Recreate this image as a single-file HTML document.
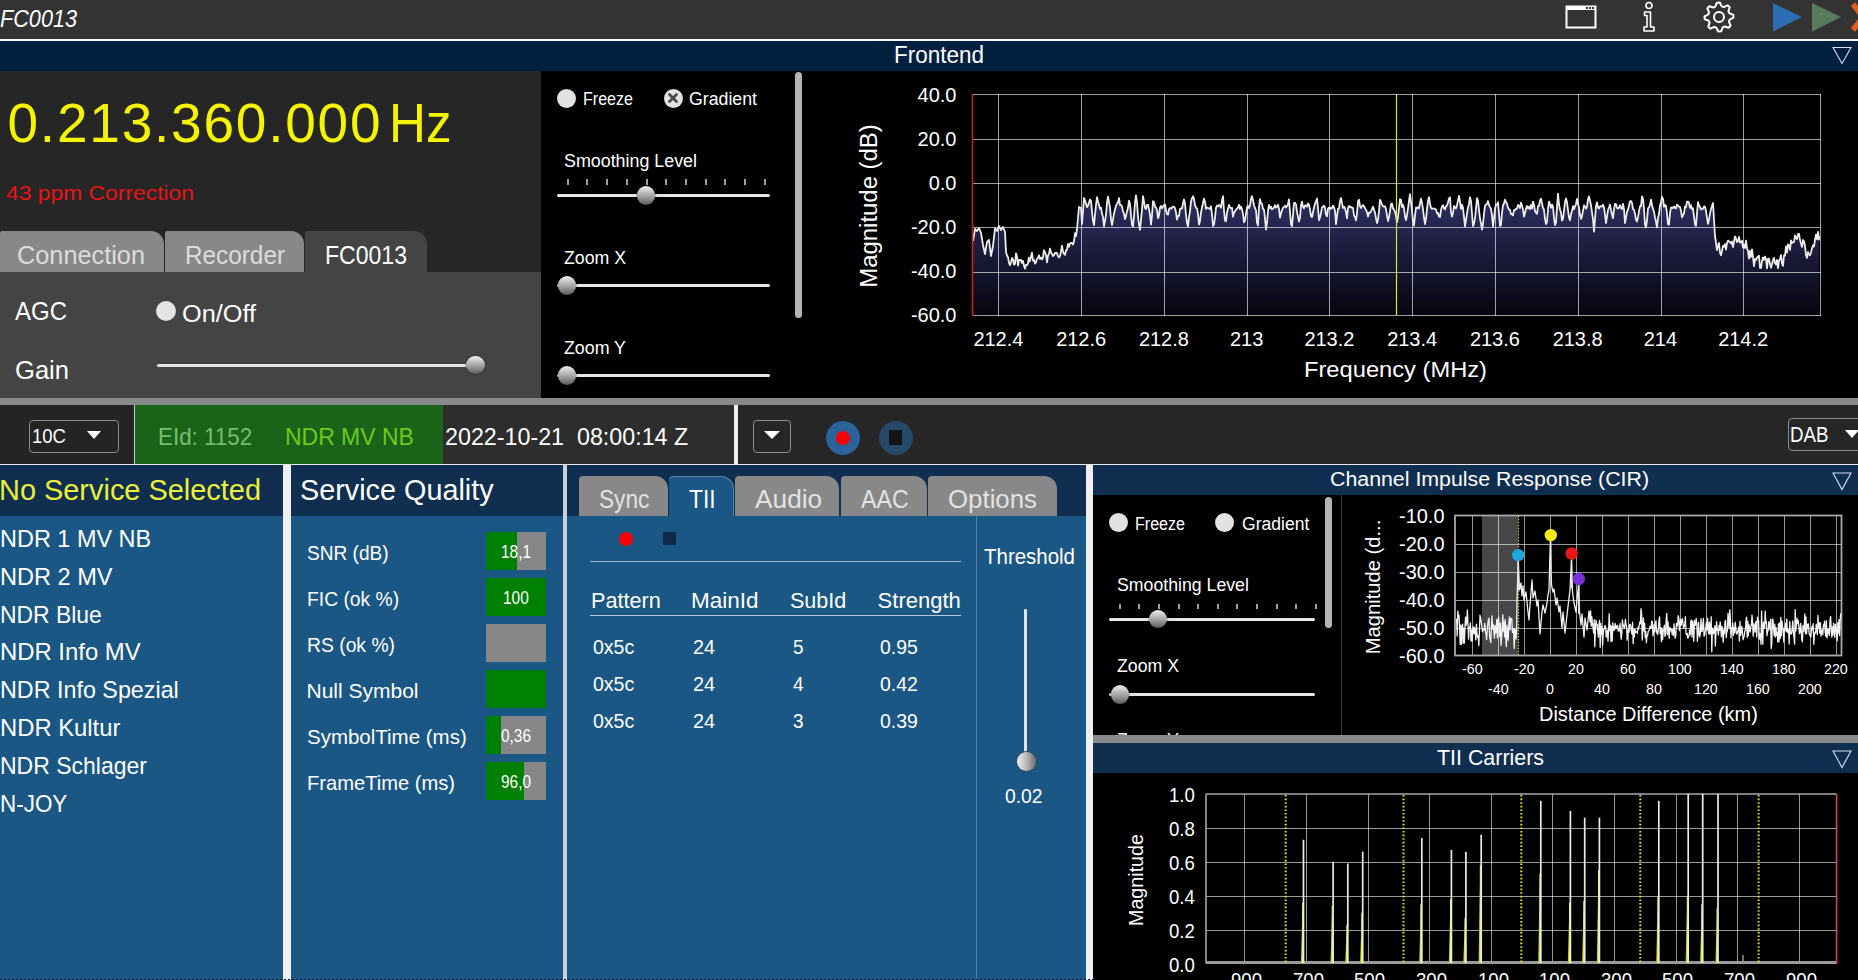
<!DOCTYPE html><html><head><meta charset="utf-8"><style>
html,body{margin:0;padding:0;background:#262626;overflow:hidden;width:1858px;height:980px;}
body>div,.a{position:absolute;}
.t{position:absolute;white-space:pre;font-family:"Liberation Sans",sans-serif;}
svg{position:absolute;}
</style></head><body>
<div style="left:0px;top:0px;width:1858px;height:39px;background:#333333;"></div>
<div style="left:0px;top:39px;width:1858px;height:2px;background:#f4f8fc;"></div>
<div style="left:0px;top:41px;width:1858px;height:30px;background:#01203f;"></div>
<div style="left:0px;top:71px;width:541px;height:327px;background:#262626;"></div>
<div style="left:0px;top:272px;width:541px;height:126px;background:#444444;"></div>
<div style="left:541px;top:71px;width:1317px;height:327px;background:#000000;"></div>
<div style="left:0px;top:398px;width:1858px;height:7px;background:#8a8a8a;"></div>
<div style="left:0px;top:405px;width:1858px;height:59px;background:#262626;"></div>
<div style="left:0px;top:464px;width:1858px;height:1px;background:#e8eef4;"></div>
<div style="left:0px;top:465px;width:283px;height:51px;background:#0f2e50;"></div>
<div style="left:0px;top:516px;width:283px;height:464px;background:#1b5784;"></div>
<div style="left:283px;top:465px;width:8px;height:515px;background:#f0f0f0;"></div>
<div style="left:291px;top:465px;width:272px;height:51px;background:#0f2e50;"></div>
<div style="left:291px;top:516px;width:272px;height:464px;background:#1b5784;"></div>
<div style="left:563px;top:465px;width:4px;height:515px;background:#c8d2de;"></div>
<div style="left:567px;top:465px;width:519px;height:51px;background:#0f2e50;"></div>
<div style="left:567px;top:516px;width:519px;height:464px;background:#1b5784;"></div>
<div style="left:1086px;top:465px;width:7px;height:515px;background:#f0f0f0;"></div>
<div style="left:1093px;top:465px;width:765px;height:30px;background:#0f2e50;"></div>
<div style="left:1093px;top:495px;width:765px;height:240px;background:#000000;"></div>
<div style="left:1093px;top:735px;width:765px;height:8px;background:#8a8a8a;"></div>
<div style="left:1093px;top:743px;width:765px;height:30px;background:#0f2e50;"></div>
<div style="left:1093px;top:773px;width:765px;height:207px;background:#000000;"></div>
<div class="t" style="left:0.00px;top:7.53px;font-size:23px;line-height:23px;color:#ffffff;font-style:italic;transform:scaleX(0.9410);transform-origin:0 0;">FC0013</div>
<svg style="left:1560px;top:0px" width="44" height="36"><rect x="6.5" y="6.5" width="29" height="21" fill="none" stroke="#fff" stroke-width="2"/><rect x="6" y="6" width="30" height="4" fill="#fff"/><rect x="26" y="7" width="2" height="2" fill="#333"/><rect x="29" y="7" width="2" height="2" fill="#333"/><rect x="32" y="7" width="2" height="2" fill="#333"/></svg>
<svg style="left:1636px;top:0px" width="26" height="36"><circle cx="13" cy="5.5" r="3" fill="none" stroke="#fff" stroke-width="1.6"/><path d="M8.5 12 H14.5 V27 H18 V31 H8 V27 H11 V15.5 H8.5 Z" fill="none" stroke="#fff" stroke-width="1.6" stroke-linejoin="round"/></svg>
<svg style="left:1700px;top:0px" width="40" height="36"><polygon points="16.87,2.66 19.71,2.52 21.67,6.33 23.70,7.06 27.64,5.35 29.74,7.26 28.44,11.34 29.36,13.29 33.34,14.87 33.48,17.71 29.67,19.67 28.94,21.70 30.65,25.64 28.74,27.74 24.66,26.44 22.71,27.36 21.13,31.34 18.29,31.48 16.33,27.67 14.30,26.94 10.36,28.65 8.26,26.74 9.56,22.66 8.64,20.71 4.66,19.13 4.52,16.29 8.33,14.33 9.06,12.30 7.35,8.36 9.26,6.26 13.34,7.56 15.29,6.64" fill="none" stroke="#fff" stroke-width="2" stroke-linejoin="round"/><circle cx="19" cy="17" r="5" fill="none" stroke="#fff" stroke-width="2"/></svg>
<svg style="left:1770px;top:0px" width="88" height="36"><polygon points="3,3 32,17 3,31.5" fill="#2b6db2"/><polygon points="42,3 71,17 42,31.5" fill="#587b5e"/><path d="M83 4 L103 30 M103 4 L83 30" stroke="#e0601c" stroke-width="5.5"/></svg>
<div class="t" style="left:893.50px;top:44.13px;font-size:23px;line-height:23px;color:#ffffff;transform:scaleX(0.9777);transform-origin:0 0;">Frontend</div>
<svg style="left:1830px;top:44px" width="24" height="22"><polygon points="3,3.5 21,3.5 12,19.5" fill="none" stroke="#d4e2f0" stroke-width="1.1"/></svg>
<div class="t" style="left:7.50px;top:96.43px;font-size:55px;line-height:55px;color:#f5f500;letter-spacing:1.773px;">0.213.360.000</div>
<div class="t" style="left:389.00px;top:96.43px;font-size:55px;line-height:55px;color:#f5f500;transform:scaleX(0.9298);transform-origin:0 0;">Hz</div>
<div class="t" style="left:5.50px;top:182.22px;font-size:21px;line-height:21px;color:#e81414;transform:scaleX(1.0883);transform-origin:0 0;">43 ppm Correction</div>
<div style="left:0px;top:231px;width:164px;height:41px;background:#888888;border-top-right-radius:13px;border-top-left-radius:2px;"></div>
<div class="t" style="left:17.00px;top:242.83px;font-size:25px;line-height:25px;color:#dcdcdc;transform:scaleX(1.0120);transform-origin:0 0;">Connection</div>
<div style="left:165px;top:231px;width:139px;height:41px;background:#888888;border-top-right-radius:13px;border-top-left-radius:2px;"></div>
<div class="t" style="left:185.00px;top:242.83px;font-size:25px;line-height:25px;color:#dcdcdc;transform:scaleX(0.9726);transform-origin:0 0;">Recorder</div>
<div style="left:305px;top:231px;width:122px;height:41px;background:#444444;border-top-right-radius:13px;border-top-left-radius:2px;"></div>
<div class="t" style="left:325.00px;top:242.83px;font-size:25px;line-height:25px;color:#ffffff;transform:scaleX(0.9220);transform-origin:0 0;">FC0013</div>
<div class="t" style="left:15.00px;top:298.83px;font-size:25px;line-height:25px;color:#ffffff;transform:scaleX(0.9599);transform-origin:0 0;">AGC</div>
<div style="left:156px;top:301px;width:20px;height:20px;border-radius:50%;background:#e4e4e4"></div>
<div class="t" style="left:182.00px;top:302.53px;font-size:23px;line-height:23px;color:#ffffff;transform:scaleX(1.0991);transform-origin:0 0;">On/Off</div>
<div class="t" style="left:15.00px;top:357.83px;font-size:25px;line-height:25px;color:#ffffff;transform:scaleX(1.0226);transform-origin:0 0;">Gain</div>
<div style="left:557.0px;top:88.5px;width:19.0px;height:19.0px;border-radius:50%;background:#e2e2e2"></div>
<div class="t" style="left:583.00px;top:89.76px;font-size:18px;line-height:18px;color:#ffffff;transform:scaleX(0.8925);transform-origin:0 0;">Freeze</div>
<div style="left:663.5px;top:88.5px;width:19.0px;height:19.0px;border-radius:50%;background:#e2e2e2"></div>
<svg style="left:663px;top:88px" width="20" height="20"><path d="M6.5 6.5 L13.5 13.5 M13.5 6.5 L6.5 13.5" stroke="#4a4a4a" stroke-width="2.8" stroke-linecap="round"/></svg>
<div class="t" style="left:689.00px;top:89.76px;font-size:18px;line-height:18px;color:#ffffff;transform:scaleX(0.9850);transform-origin:0 0;">Gradient</div>
<div class="t" style="left:564.00px;top:152.26px;font-size:18px;line-height:18px;color:#ffffff;transform:scaleX(0.9919);transform-origin:0 0;">Smoothing Level</div>
<div style="left:566.5px;top:179px;width:2px;height:5.5px;background:#a0a0a0;"></div>
<div style="left:585.5px;top:179px;width:2px;height:5.5px;background:#a0a0a0;"></div>
<div style="left:605.5px;top:179px;width:2px;height:5.5px;background:#a0a0a0;"></div>
<div style="left:625.5px;top:179px;width:2px;height:5.5px;background:#a0a0a0;"></div>
<div style="left:645.5px;top:179px;width:2px;height:5.5px;background:#a0a0a0;"></div>
<div style="left:664.5px;top:179px;width:2px;height:5.5px;background:#a0a0a0;"></div>
<div style="left:684.5px;top:179px;width:2px;height:5.5px;background:#a0a0a0;"></div>
<div style="left:704.5px;top:179px;width:2px;height:5.5px;background:#a0a0a0;"></div>
<div style="left:723.5px;top:179px;width:2px;height:5.5px;background:#a0a0a0;"></div>
<div style="left:743.5px;top:179px;width:2px;height:5.5px;background:#a0a0a0;"></div>
<div style="left:763.5px;top:179px;width:2px;height:5.5px;background:#a0a0a0;"></div>
<div style="left:557px;top:194.0px;width:213px;height:3px;background:#e6e6e6;border-radius:2px;"></div>
<div style="left:636.8px;top:186.3px;width:18.4px;height:18.4px;border-radius:50%;background:linear-gradient(180deg,#f2f2f2 0%,#c4c4c4 30%,#9a9a9a 60%,#5a5a5a 100%);box-shadow:0 0 1.5px #000"></div>
<div class="t" style="left:564.00px;top:248.76px;font-size:18px;line-height:18px;color:#ffffff;transform:scaleX(0.9838);transform-origin:0 0;">Zoom X</div>
<div style="left:557px;top:284.0px;width:213px;height:3px;background:#e6e6e6;border-radius:2px;"></div>
<div style="left:557.8px;top:276.3px;width:18.4px;height:18.4px;border-radius:50%;background:linear-gradient(180deg,#f2f2f2 0%,#c4c4c4 30%,#9a9a9a 60%,#5a5a5a 100%);box-shadow:0 0 1.5px #000"></div>
<div class="t" style="left:564.00px;top:338.76px;font-size:18px;line-height:18px;color:#ffffff;transform:scaleX(0.9889);transform-origin:0 0;">Zoom Y</div>
<div style="left:557px;top:374.0px;width:213px;height:3px;background:#e6e6e6;border-radius:2px;"></div>
<div style="left:557.8px;top:366.3px;width:18.4px;height:18.4px;border-radius:50%;background:linear-gradient(180deg,#f2f2f2 0%,#c4c4c4 30%,#9a9a9a 60%,#5a5a5a 100%);box-shadow:0 0 1.5px #000"></div>
<div style="left:795px;top:72px;width:7px;height:246px;background:#b4b4b4;border-radius:4px;"></div>
<div style="left:157px;top:363.5px;width:310px;height:3px;background:#e6e6e6;border-radius:2px;"></div>
<div style="left:466.4px;top:355.8px;width:18.4px;height:18.4px;border-radius:50%;background:linear-gradient(180deg,#f2f2f2 0%,#c4c4c4 30%,#9a9a9a 60%,#5a5a5a 100%);box-shadow:0 0 1.5px #000"></div>
<svg style="left:807px;top:71px" width="1051" height="327" viewBox="807 71 1051 327"><defs><linearGradient id="sg" x1="0" y1="94" x2="0" y2="315" gradientUnits="userSpaceOnUse"><stop offset="0" stop-color="#5a5aa8"/><stop offset="0.5" stop-color="#2c2c5e"/><stop offset="1" stop-color="#06060f"/></linearGradient></defs><polygon points="973.0,315 973.0,241.0 974.0,235.0 975.0,229.0 976.0,230.0 977.0,231.0 978.0,229.5 979.0,228.0 980.0,230.5 981.0,233.0 982.0,239.0 983.0,245.0 984.0,249.5 985.0,254.0 986.0,248.0 987.0,242.0 988.0,241.0 989.0,240.0 990.0,248.0 991.0,256.0 992.0,251.0 993.0,246.0 994.0,237.0 995.0,228.0 996.0,229.5 997.0,231.0 998.0,228.5 999.0,226.0 1000.0,228.0 1001.0,230.0 1002.0,228.5 1003.0,227.0 1004.0,229.5 1005.0,232.0 1006.0,252.0 1007.0,255.5 1008.0,257.2 1009.0,262.8 1010.0,265.1 1011.0,262.2 1012.0,257.9 1013.0,259.5 1014.0,264.6 1015.0,263.9 1016.0,253.3 1017.0,256.6 1018.0,265.5 1019.0,259.8 1020.0,260.4 1021.0,259.8 1022.0,263.0 1023.0,260.9 1024.0,265.6 1025.0,268.6 1026.0,264.8 1027.0,265.0 1028.0,263.2 1028.8,257.7 1029.6,261.4 1030.4,259.0 1031.2,255.8 1032.0,252.7 1033.0,260.6 1034.0,259.8 1035.0,263.5 1036.0,262.3 1037.0,258.8 1038.0,257.9 1039.0,255.3 1040.0,259.1 1041.0,257.6 1042.0,259.4 1043.0,257.3 1044.0,250.2 1045.0,252.5 1046.0,255.0 1047.0,262.3 1048.0,255.6 1049.0,253.9 1050.0,248.6 1051.0,252.4 1052.0,253.9 1053.0,256.0 1054.0,255.3 1055.0,252.9 1056.0,252.8 1057.0,252.9 1058.0,256.3 1059.0,257.5 1060.0,256.1 1061.0,251.5 1062.0,245.6 1063.0,251.9 1064.0,253.9 1065.0,254.8 1066.0,250.5 1067.0,249.5 1068.0,244.0 1069.0,246.8 1070.0,243.5 1071.0,243.0 1072.0,242.9 1073.0,244.5 1074.0,241.4 1075.0,233.1 1076.0,236.1 1077.0,229.0 1078.0,218.0 1079.0,207.0 1080.0,207.5 1081.0,208.0 1082.0,224.0 1083.0,211.0 1084.0,198.0 1085.0,200.5 1087.0,207.1 1088.0,205.8 1089.0,202.7 1090.0,199.6 1091.0,200.8 1092.0,211.4 1093.0,220.8 1094.0,225.1 1095.0,215.1 1096.0,205.0 1097.0,197.2 1098.0,201.4 1099.0,205.0 1100.0,208.8 1101.0,207.6 1102.0,213.6 1103.0,217.1 1104.0,226.3 1105.0,220.9 1106.0,214.7 1107.0,202.6 1108.0,196.7 1109.0,202.2 1110.0,207.6 1111.0,219.2 1112.0,225.2 1113.0,219.6 1114.0,213.5 1115.0,209.4 1116.0,205.8 1117.0,203.7 1118.0,202.2 1119.0,198.1 1120.0,205.1 1121.0,205.1 1122.0,206.5 1123.0,211.2 1124.0,213.5 1125.0,219.0 1126.0,215.9 1127.0,211.4 1128.0,207.8 1129.0,200.6 1130.0,203.9 1131.0,215.6 1132.0,224.8 1133.0,226.4 1134.0,216.0 1135.0,202.7 1136.0,195.3 1137.0,202.5 1138.0,217.2 1139.0,224.6 1140.0,229.9 1141.0,220.3 1142.0,209.1 1143.0,196.2 1144.0,201.7 1145.0,207.9 1146.0,209.1 1147.0,205.0 1148.0,204.8 1149.0,209.3 1150.0,214.7 1151.0,224.6 1152.0,215.5 1153.0,201.1 1154.0,201.9 1155.0,206.7 1156.0,207.5 1157.0,210.2 1158.0,218.2 1159.0,215.6 1160.0,207.4 1161.0,205.9 1162.0,208.2 1163.0,206.5 1164.0,205.0 1165.0,204.5 1166.0,210.3 1167.0,214.2 1168.0,214.6 1169.0,209.1 1170.0,208.0 1171.0,208.8 1172.0,207.6 1173.0,206.5 1174.0,206.8 1175.0,208.1 1176.0,212.5 1177.0,219.6 1178.0,216.0 1179.0,215.8 1180.0,209.1 1181.0,208.4 1182.0,208.6 1183.0,203.3 1184.0,199.5 1185.0,203.4 1186.0,215.1 1187.0,222.9 1188.0,226.4 1189.0,217.2 1190.0,211.3 1191.0,201.7 1192.0,198.3 1193.0,196.3 1194.0,198.9 1195.0,205.4 1196.0,207.7 1197.0,208.4 1198.0,213.7 1199.0,224.5 1200.0,221.3 1201.0,212.4 1202.0,207.7 1203.0,203.0 1204.0,198.7 1205.0,201.7 1206.0,208.9 1207.0,207.7 1208.0,208.0 1209.0,208.3 1210.0,209.2 1211.0,206.3 1212.0,214.1 1213.0,226.0 1214.0,224.7 1215.0,217.5 1216.0,207.9 1217.0,205.5 1218.0,206.4 1219.0,205.0 1220.0,205.8 1221.0,207.7 1222.0,200.5 1223.0,196.1 1224.0,210.5 1225.0,220.7 1226.0,221.3 1227.0,212.7 1228.0,208.5 1229.0,204.9 1230.0,207.5 1231.0,208.3 1232.0,207.7 1233.0,216.7 1234.0,212.8 1235.0,211.2 1236.0,209.8 1237.0,208.4 1238.0,207.6 1239.0,204.8 1240.0,209.2 1241.0,206.6 1242.0,209.4 1243.0,213.8 1244.0,222.4 1245.0,220.4 1246.0,214.0 1247.0,207.3 1248.0,205.9 1249.0,208.1 1250.0,205.3 1251.0,198.7 1252.0,196.1 1253.0,200.3 1254.0,205.3 1255.0,208.3 1256.0,210.1 1257.0,222.8 1258.0,225.5 1259.0,207.1 1260.0,199.2 1261.0,203.3 1262.0,203.8 1263.0,209.0 1264.0,209.7 1265.0,218.6 1266.0,229.7 1267.0,222.5 1268.0,211.0 1269.0,204.9 1270.0,208.1 1271.0,206.8 1272.0,209.4 1273.0,208.6 1274.0,207.5 1275.0,205.1 1276.0,207.6 1277.0,206.8 1278.0,204.8 1279.0,208.9 1280.0,217.7 1281.0,213.6 1282.0,210.1 1283.0,207.8 1284.0,206.8 1285.0,205.8 1286.0,207.4 1287.0,206.0 1288.0,204.2 1289.0,199.4 1290.0,212.2 1291.0,224.3 1292.0,226.1 1293.0,214.9 1294.0,203.0 1295.0,202.9 1296.0,204.2 1297.0,212.1 1298.0,216.7 1299.0,221.5 1300.0,218.0 1301.0,205.3 1302.0,201.7 1303.0,206.8 1304.0,208.3 1305.0,205.4 1306.0,205.7 1307.0,206.7 1308.0,203.4 1309.0,204.8 1310.0,209.2 1311.0,216.2 1312.0,217.2 1313.0,212.1 1314.0,207.6 1315.0,203.8 1316.0,201.2 1317.0,198.5 1318.0,207.9 1319.0,220.3 1320.0,217.3 1321.0,213.1 1322.0,207.3 1323.0,206.9 1324.0,205.6 1325.0,207.7 1326.0,214.4 1327.0,216.3 1328.0,208.7 1329.0,207.5 1330.0,209.2 1331.0,207.6 1332.0,208.3 1333.0,205.6 1334.0,207.5 1335.0,210.7 1336.0,224.1 1337.0,216.4 1338.0,208.8 1339.0,208.6 1340.0,201.1 1341.0,198.0 1342.0,203.1 1343.0,208.1 1344.0,206.6 1345.0,208.2 1346.0,212.2 1347.0,218.4 1348.0,207.8 1349.0,205.9 1350.0,207.3 1351.0,206.9 1352.0,207.9 1353.0,208.0 1354.0,215.4 1355.0,216.9 1356.0,220.4 1357.0,213.8 1358.0,201.3 1359.0,199.7 1360.0,206.3 1361.0,208.0 1362.0,205.9 1363.0,205.2 1364.0,206.3 1365.0,208.1 1366.0,209.9 1367.0,212.2 1368.0,216.6 1369.0,212.5 1370.0,212.8 1371.0,211.4 1372.0,209.1 1373.0,206.7 1374.0,209.5 1375.0,212.7 1376.0,218.4 1377.0,223.1 1378.0,219.6 1379.0,211.1 1380.0,199.8 1381.0,201.7 1382.0,204.5 1383.0,206.3 1384.0,206.5 1385.0,206.4 1386.0,209.1 1387.0,215.4 1388.0,221.0 1389.0,217.2 1390.0,210.7 1391.0,204.3 1392.0,203.5 1393.0,208.3 1394.0,209.5 1395.0,211.8 1396.0,215.9 1397.0,222.2 1398.0,217.0 1399.0,208.2 1400.0,199.2 1401.0,199.7 1402.0,207.1 1403.0,204.8 1404.0,208.0 1405.0,216.4 1406.0,220.0 1407.0,215.2 1408.0,208.4 1409.0,200.8 1410.0,194.1 1411.0,202.1 1412.0,210.1 1413.0,221.3 1414.0,225.5 1415.0,215.6 1416.0,207.5 1417.0,208.3 1418.0,207.1 1419.0,208.3 1420.0,203.3 1421.0,198.7 1422.0,202.6 1423.0,209.6 1424.0,217.6 1425.0,224.2 1426.0,218.8 1427.0,209.1 1428.0,201.1 1429.0,197.2 1430.0,204.0 1431.0,207.8 1432.0,208.8 1433.0,208.5 1434.0,208.7 1435.0,208.9 1436.0,209.7 1437.0,213.3 1438.0,212.9 1439.0,216.7 1440.0,217.0 1441.0,209.9 1442.0,206.6 1443.0,205.2 1444.0,208.2 1445.0,209.5 1446.0,206.4 1447.0,205.3 1448.0,202.5 1449.0,198.4 1450.0,197.3 1451.0,212.2 1452.0,216.5 1453.0,213.3 1454.0,206.0 1455.0,207.7 1456.0,208.4 1457.0,205.4 1458.0,200.4 1459.0,196.0 1460.0,201.5 1461.0,209.0 1462.0,204.7 1463.0,207.8 1464.0,217.1 1465.0,226.3 1466.0,220.0 1467.0,213.4 1468.0,207.5 1469.0,203.9 1470.0,197.2 1471.0,201.1 1472.0,213.8 1473.0,226.2 1474.0,223.6 1475.0,218.1 1476.0,208.4 1477.0,198.1 1478.0,200.8 1479.0,210.2 1480.0,218.5 1481.0,223.2 1482.0,229.5 1483.0,224.0 1484.0,214.0 1485.0,205.6 1486.0,204.7 1487.0,204.0 1488.0,201.0 1489.0,205.1 1490.0,207.1 1491.0,208.8 1492.0,215.3 1493.0,226.5 1494.0,218.3 1495.0,208.6 1496.0,204.6 1497.0,204.7 1498.0,202.3 1499.0,213.9 1500.0,226.0 1501.0,224.8 1502.0,212.9 1503.0,205.3 1504.0,203.5 1505.0,199.6 1506.0,202.0 1507.0,203.9 1508.0,207.7 1509.0,209.5 1510.0,209.7 1511.0,214.2 1512.0,214.1 1513.0,215.4 1514.0,209.8 1515.0,210.2 1516.0,208.7 1517.0,208.6 1518.0,204.9 1519.0,205.8 1520.0,208.1 1521.0,202.7 1522.0,205.5 1523.0,209.4 1524.0,216.6 1525.0,213.1 1526.0,208.8 1527.0,206.0 1528.0,208.4 1529.0,206.6 1530.0,209.1 1531.0,205.0 1532.0,208.6 1533.0,201.6 1534.0,204.7 1535.0,210.8 1536.0,212.8 1537.0,213.9 1538.0,206.1 1539.0,205.8 1540.0,200.9 1541.0,198.7 1542.0,203.2 1543.0,208.1 1544.0,209.5 1545.0,219.1 1546.0,224.1 1547.0,221.8 1548.0,209.0 1549.0,201.6 1550.0,204.3 1551.0,207.8 1552.0,204.6 1553.0,206.7 1554.0,218.0 1555.0,225.2 1556.0,223.0 1557.0,207.1 1558.0,193.6 1559.0,204.3 1560.0,209.5 1561.0,212.5 1562.0,220.6 1563.0,218.8 1564.0,210.8 1565.0,201.9 1566.0,198.4 1567.0,202.3 1568.0,210.1 1569.0,217.5 1570.0,220.2 1571.0,214.1 1572.0,210.9 1573.0,206.1 1574.0,209.2 1575.0,206.5 1576.0,204.2 1577.0,199.0 1578.0,204.0 1579.0,207.2 1580.0,214.5 1581.0,218.9 1582.0,216.2 1583.0,210.7 1584.0,205.4 1585.0,206.5 1586.0,208.7 1587.0,206.7 1588.0,199.5 1589.0,196.4 1590.0,200.7 1591.0,205.1 1592.0,212.4 1593.0,219.1 1594.0,231.6 1595.0,219.1 1596.0,206.3 1597.0,202.4 1598.0,207.7 1599.0,208.6 1600.0,206.4 1601.0,206.2 1602.0,206.6 1603.0,204.6 1604.0,207.6 1605.0,214.9 1606.0,223.2 1607.0,216.4 1608.0,210.0 1609.0,207.5 1610.0,204.6 1611.0,209.9 1612.0,214.2 1613.0,218.2 1614.0,209.4 1615.0,203.9 1616.0,204.1 1617.0,207.9 1618.0,208.6 1619.0,207.6 1620.0,205.3 1621.0,208.3 1622.0,209.0 1623.0,203.9 1624.0,209.2 1625.0,223.0 1626.0,217.9 1627.0,211.9 1628.0,209.4 1629.0,205.6 1630.0,201.5 1631.0,200.9 1632.0,202.8 1633.0,209.2 1634.0,209.7 1635.0,213.8 1636.0,219.5 1637.0,221.5 1638.0,216.9 1639.0,211.3 1640.0,206.1 1641.0,206.3 1642.0,196.4 1643.0,198.9 1644.0,208.9 1645.0,224.6 1646.0,227.4 1647.0,220.7 1648.0,208.3 1649.0,207.3 1650.0,204.7 1651.0,199.6 1652.0,205.0 1653.0,209.0 1654.0,211.6 1655.0,217.4 1656.0,221.8 1657.0,227.4 1658.0,217.9 1659.0,214.1 1660.0,205.7 1661.0,201.9 1662.0,196.9 1663.0,198.8 1664.0,206.8 1665.0,204.9 1666.0,205.9 1667.0,213.6 1668.0,224.1 1669.0,224.7 1670.0,213.0 1671.0,207.7 1672.0,207.5 1673.0,208.2 1674.0,206.4 1675.0,207.5 1676.0,208.5 1677.0,204.6 1678.0,205.5 1679.0,206.8 1680.0,206.9 1681.0,210.9 1682.0,217.4 1683.0,215.1 1684.0,213.5 1685.0,206.4 1686.0,207.2 1687.0,201.7 1688.0,201.7 1689.0,202.9 1690.0,207.9 1691.0,205.2 1692.0,209.3 1693.0,208.3 1694.0,216.3 1695.0,224.6 1696.0,225.9 1697.0,213.1 1698.0,202.1 1699.0,205.3 1700.0,206.9 1701.0,209.5 1702.0,208.7 1703.0,208.8 1704.0,206.5 1705.0,206.7 1706.0,211.0 1707.0,217.8 1708.0,223.9 1709.0,219.7 1710.0,213.4 1711.0,209.0 1712.0,206.1 1713.0,203.0 1715.0,236.0 1717.0,250.0 1719.0,242.8 1720.0,252.9 1721.0,255.2 1722.0,250.6 1723.0,245.8 1724.0,246.8 1725.0,244.1 1726.0,249.6 1727.0,243.2 1728.0,240.6 1729.0,241.3 1730.0,242.2 1731.0,243.6 1732.0,241.5 1733.0,247.1 1734.0,241.7 1735.0,236.4 1736.0,238.4 1737.0,242.1 1738.0,241.2 1739.0,236.9 1740.0,242.7 1741.0,242.2 1742.0,240.8 1743.0,247.6 1744.0,244.7 1745.0,248.0 1746.0,240.6 1747.0,248.2 1748.0,250.8 1749.0,258.6 1750.0,250.8 1751.0,257.0 1752.0,249.3 1753.0,256.7 1754.0,266.1 1755.0,259.0 1756.0,260.1 1757.0,257.5 1758.0,256.6 1759.0,255.7 1760.0,268.0 1761.0,267.8 1762.0,260.9 1763.0,257.5 1764.0,259.8 1765.0,256.5 1766.0,259.0 1767.0,268.3 1768.0,258.9 1769.0,258.6 1770.0,264.1 1771.0,267.7 1772.0,264.2 1773.0,260.0 1774.0,257.9 1775.0,263.1 1776.0,264.5 1777.0,259.9 1778.0,268.2 1779.0,260.8 1780.0,259.1 1781.0,255.0 1782.0,263.4 1783.0,265.8 1784.0,255.5 1785.0,255.7 1786.0,246.4 1787.0,252.5 1788.0,244.4 1789.0,245.6 1790.0,249.9 1791.0,240.5 1792.0,243.1 1793.0,242.2 1794.0,241.8 1795.0,235.3 1796.0,238.0 1797.0,239.1 1798.0,234.2 1799.0,233.8 1800.0,240.1 1801.0,243.3 1802.0,246.9 1803.0,240.0 1804.0,241.3 1805.0,246.2 1806.0,255.2 1807.0,257.9 1808.0,252.0 1809.0,254.4 1810.0,255.2 1811.0,252.6 1812.0,248.2 1813.0,245.3 1814.0,246.6 1815.0,239.7 1816.0,234.6 1817.0,239.3 1818.0,231.9 1819.0,239.7 1819.0,236.0 1819,315" fill="url(#sg)"/><line x1="972" y1="94.5" x2="1821" y2="94.5" stroke="rgba(255,255,255,0.62)" stroke-width="1"/><line x1="972" y1="139.5" x2="1821" y2="139.5" stroke="rgba(255,255,255,0.62)" stroke-width="1"/><line x1="972" y1="183.5" x2="1821" y2="183.5" stroke="rgba(255,255,255,0.62)" stroke-width="1"/><line x1="972" y1="227.5" x2="1821" y2="227.5" stroke="rgba(255,255,255,0.62)" stroke-width="1"/><line x1="972" y1="272.5" x2="1821" y2="272.5" stroke="rgba(255,255,255,0.62)" stroke-width="1"/><line x1="972" y1="315.5" x2="1821" y2="315.5" stroke="rgba(255,255,255,0.62)" stroke-width="1"/><line x1="998.5" y1="94" x2="998.5" y2="316" stroke="rgba(255,255,255,0.62)" stroke-width="1"/><line x1="1081.5" y1="94" x2="1081.5" y2="316" stroke="rgba(255,255,255,0.62)" stroke-width="1"/><line x1="1164.5" y1="94" x2="1164.5" y2="316" stroke="rgba(255,255,255,0.62)" stroke-width="1"/><line x1="1247.5" y1="94" x2="1247.5" y2="316" stroke="rgba(255,255,255,0.62)" stroke-width="1"/><line x1="1329.5" y1="94" x2="1329.5" y2="316" stroke="rgba(255,255,255,0.62)" stroke-width="1"/><line x1="1412.5" y1="94" x2="1412.5" y2="316" stroke="rgba(255,255,255,0.62)" stroke-width="1"/><line x1="1495.5" y1="94" x2="1495.5" y2="316" stroke="rgba(255,255,255,0.62)" stroke-width="1"/><line x1="1578.5" y1="94" x2="1578.5" y2="316" stroke="rgba(255,255,255,0.62)" stroke-width="1"/><line x1="1661.5" y1="94" x2="1661.5" y2="316" stroke="rgba(255,255,255,0.62)" stroke-width="1"/><line x1="1743.5" y1="94" x2="1743.5" y2="316" stroke="rgba(255,255,255,0.62)" stroke-width="1"/><line x1="1820.5" y1="94" x2="1820.5" y2="316" stroke="rgba(255,255,255,0.62)" stroke-width="1"/><polyline points="973.0,241.0 974.0,235.0 975.0,229.0 976.0,230.0 977.0,231.0 978.0,229.5 979.0,228.0 980.0,230.5 981.0,233.0 982.0,239.0 983.0,245.0 984.0,249.5 985.0,254.0 986.0,248.0 987.0,242.0 988.0,241.0 989.0,240.0 990.0,248.0 991.0,256.0 992.0,251.0 993.0,246.0 994.0,237.0 995.0,228.0 996.0,229.5 997.0,231.0 998.0,228.5 999.0,226.0 1000.0,228.0 1001.0,230.0 1002.0,228.5 1003.0,227.0 1004.0,229.5 1005.0,232.0 1006.0,252.0 1007.0,255.5 1008.0,257.2 1009.0,262.8 1010.0,265.1 1011.0,262.2 1012.0,257.9 1013.0,259.5 1014.0,264.6 1015.0,263.9 1016.0,253.3 1017.0,256.6 1018.0,265.5 1019.0,259.8 1020.0,260.4 1021.0,259.8 1022.0,263.0 1023.0,260.9 1024.0,265.6 1025.0,268.6 1026.0,264.8 1027.0,265.0 1028.0,263.2 1028.8,257.7 1029.6,261.4 1030.4,259.0 1031.2,255.8 1032.0,252.7 1033.0,260.6 1034.0,259.8 1035.0,263.5 1036.0,262.3 1037.0,258.8 1038.0,257.9 1039.0,255.3 1040.0,259.1 1041.0,257.6 1042.0,259.4 1043.0,257.3 1044.0,250.2 1045.0,252.5 1046.0,255.0 1047.0,262.3 1048.0,255.6 1049.0,253.9 1050.0,248.6 1051.0,252.4 1052.0,253.9 1053.0,256.0 1054.0,255.3 1055.0,252.9 1056.0,252.8 1057.0,252.9 1058.0,256.3 1059.0,257.5 1060.0,256.1 1061.0,251.5 1062.0,245.6 1063.0,251.9 1064.0,253.9 1065.0,254.8 1066.0,250.5 1067.0,249.5 1068.0,244.0 1069.0,246.8 1070.0,243.5 1071.0,243.0 1072.0,242.9 1073.0,244.5 1074.0,241.4 1075.0,233.1 1076.0,236.1 1077.0,229.0 1078.0,218.0 1079.0,207.0 1080.0,207.5 1081.0,208.0 1082.0,224.0 1083.0,211.0 1084.0,198.0 1085.0,200.5 1087.0,207.1 1088.0,205.8 1089.0,202.7 1090.0,199.6 1091.0,200.8 1092.0,211.4 1093.0,220.8 1094.0,225.1 1095.0,215.1 1096.0,205.0 1097.0,197.2 1098.0,201.4 1099.0,205.0 1100.0,208.8 1101.0,207.6 1102.0,213.6 1103.0,217.1 1104.0,226.3 1105.0,220.9 1106.0,214.7 1107.0,202.6 1108.0,196.7 1109.0,202.2 1110.0,207.6 1111.0,219.2 1112.0,225.2 1113.0,219.6 1114.0,213.5 1115.0,209.4 1116.0,205.8 1117.0,203.7 1118.0,202.2 1119.0,198.1 1120.0,205.1 1121.0,205.1 1122.0,206.5 1123.0,211.2 1124.0,213.5 1125.0,219.0 1126.0,215.9 1127.0,211.4 1128.0,207.8 1129.0,200.6 1130.0,203.9 1131.0,215.6 1132.0,224.8 1133.0,226.4 1134.0,216.0 1135.0,202.7 1136.0,195.3 1137.0,202.5 1138.0,217.2 1139.0,224.6 1140.0,229.9 1141.0,220.3 1142.0,209.1 1143.0,196.2 1144.0,201.7 1145.0,207.9 1146.0,209.1 1147.0,205.0 1148.0,204.8 1149.0,209.3 1150.0,214.7 1151.0,224.6 1152.0,215.5 1153.0,201.1 1154.0,201.9 1155.0,206.7 1156.0,207.5 1157.0,210.2 1158.0,218.2 1159.0,215.6 1160.0,207.4 1161.0,205.9 1162.0,208.2 1163.0,206.5 1164.0,205.0 1165.0,204.5 1166.0,210.3 1167.0,214.2 1168.0,214.6 1169.0,209.1 1170.0,208.0 1171.0,208.8 1172.0,207.6 1173.0,206.5 1174.0,206.8 1175.0,208.1 1176.0,212.5 1177.0,219.6 1178.0,216.0 1179.0,215.8 1180.0,209.1 1181.0,208.4 1182.0,208.6 1183.0,203.3 1184.0,199.5 1185.0,203.4 1186.0,215.1 1187.0,222.9 1188.0,226.4 1189.0,217.2 1190.0,211.3 1191.0,201.7 1192.0,198.3 1193.0,196.3 1194.0,198.9 1195.0,205.4 1196.0,207.7 1197.0,208.4 1198.0,213.7 1199.0,224.5 1200.0,221.3 1201.0,212.4 1202.0,207.7 1203.0,203.0 1204.0,198.7 1205.0,201.7 1206.0,208.9 1207.0,207.7 1208.0,208.0 1209.0,208.3 1210.0,209.2 1211.0,206.3 1212.0,214.1 1213.0,226.0 1214.0,224.7 1215.0,217.5 1216.0,207.9 1217.0,205.5 1218.0,206.4 1219.0,205.0 1220.0,205.8 1221.0,207.7 1222.0,200.5 1223.0,196.1 1224.0,210.5 1225.0,220.7 1226.0,221.3 1227.0,212.7 1228.0,208.5 1229.0,204.9 1230.0,207.5 1231.0,208.3 1232.0,207.7 1233.0,216.7 1234.0,212.8 1235.0,211.2 1236.0,209.8 1237.0,208.4 1238.0,207.6 1239.0,204.8 1240.0,209.2 1241.0,206.6 1242.0,209.4 1243.0,213.8 1244.0,222.4 1245.0,220.4 1246.0,214.0 1247.0,207.3 1248.0,205.9 1249.0,208.1 1250.0,205.3 1251.0,198.7 1252.0,196.1 1253.0,200.3 1254.0,205.3 1255.0,208.3 1256.0,210.1 1257.0,222.8 1258.0,225.5 1259.0,207.1 1260.0,199.2 1261.0,203.3 1262.0,203.8 1263.0,209.0 1264.0,209.7 1265.0,218.6 1266.0,229.7 1267.0,222.5 1268.0,211.0 1269.0,204.9 1270.0,208.1 1271.0,206.8 1272.0,209.4 1273.0,208.6 1274.0,207.5 1275.0,205.1 1276.0,207.6 1277.0,206.8 1278.0,204.8 1279.0,208.9 1280.0,217.7 1281.0,213.6 1282.0,210.1 1283.0,207.8 1284.0,206.8 1285.0,205.8 1286.0,207.4 1287.0,206.0 1288.0,204.2 1289.0,199.4 1290.0,212.2 1291.0,224.3 1292.0,226.1 1293.0,214.9 1294.0,203.0 1295.0,202.9 1296.0,204.2 1297.0,212.1 1298.0,216.7 1299.0,221.5 1300.0,218.0 1301.0,205.3 1302.0,201.7 1303.0,206.8 1304.0,208.3 1305.0,205.4 1306.0,205.7 1307.0,206.7 1308.0,203.4 1309.0,204.8 1310.0,209.2 1311.0,216.2 1312.0,217.2 1313.0,212.1 1314.0,207.6 1315.0,203.8 1316.0,201.2 1317.0,198.5 1318.0,207.9 1319.0,220.3 1320.0,217.3 1321.0,213.1 1322.0,207.3 1323.0,206.9 1324.0,205.6 1325.0,207.7 1326.0,214.4 1327.0,216.3 1328.0,208.7 1329.0,207.5 1330.0,209.2 1331.0,207.6 1332.0,208.3 1333.0,205.6 1334.0,207.5 1335.0,210.7 1336.0,224.1 1337.0,216.4 1338.0,208.8 1339.0,208.6 1340.0,201.1 1341.0,198.0 1342.0,203.1 1343.0,208.1 1344.0,206.6 1345.0,208.2 1346.0,212.2 1347.0,218.4 1348.0,207.8 1349.0,205.9 1350.0,207.3 1351.0,206.9 1352.0,207.9 1353.0,208.0 1354.0,215.4 1355.0,216.9 1356.0,220.4 1357.0,213.8 1358.0,201.3 1359.0,199.7 1360.0,206.3 1361.0,208.0 1362.0,205.9 1363.0,205.2 1364.0,206.3 1365.0,208.1 1366.0,209.9 1367.0,212.2 1368.0,216.6 1369.0,212.5 1370.0,212.8 1371.0,211.4 1372.0,209.1 1373.0,206.7 1374.0,209.5 1375.0,212.7 1376.0,218.4 1377.0,223.1 1378.0,219.6 1379.0,211.1 1380.0,199.8 1381.0,201.7 1382.0,204.5 1383.0,206.3 1384.0,206.5 1385.0,206.4 1386.0,209.1 1387.0,215.4 1388.0,221.0 1389.0,217.2 1390.0,210.7 1391.0,204.3 1392.0,203.5 1393.0,208.3 1394.0,209.5 1395.0,211.8 1396.0,215.9 1397.0,222.2 1398.0,217.0 1399.0,208.2 1400.0,199.2 1401.0,199.7 1402.0,207.1 1403.0,204.8 1404.0,208.0 1405.0,216.4 1406.0,220.0 1407.0,215.2 1408.0,208.4 1409.0,200.8 1410.0,194.1 1411.0,202.1 1412.0,210.1 1413.0,221.3 1414.0,225.5 1415.0,215.6 1416.0,207.5 1417.0,208.3 1418.0,207.1 1419.0,208.3 1420.0,203.3 1421.0,198.7 1422.0,202.6 1423.0,209.6 1424.0,217.6 1425.0,224.2 1426.0,218.8 1427.0,209.1 1428.0,201.1 1429.0,197.2 1430.0,204.0 1431.0,207.8 1432.0,208.8 1433.0,208.5 1434.0,208.7 1435.0,208.9 1436.0,209.7 1437.0,213.3 1438.0,212.9 1439.0,216.7 1440.0,217.0 1441.0,209.9 1442.0,206.6 1443.0,205.2 1444.0,208.2 1445.0,209.5 1446.0,206.4 1447.0,205.3 1448.0,202.5 1449.0,198.4 1450.0,197.3 1451.0,212.2 1452.0,216.5 1453.0,213.3 1454.0,206.0 1455.0,207.7 1456.0,208.4 1457.0,205.4 1458.0,200.4 1459.0,196.0 1460.0,201.5 1461.0,209.0 1462.0,204.7 1463.0,207.8 1464.0,217.1 1465.0,226.3 1466.0,220.0 1467.0,213.4 1468.0,207.5 1469.0,203.9 1470.0,197.2 1471.0,201.1 1472.0,213.8 1473.0,226.2 1474.0,223.6 1475.0,218.1 1476.0,208.4 1477.0,198.1 1478.0,200.8 1479.0,210.2 1480.0,218.5 1481.0,223.2 1482.0,229.5 1483.0,224.0 1484.0,214.0 1485.0,205.6 1486.0,204.7 1487.0,204.0 1488.0,201.0 1489.0,205.1 1490.0,207.1 1491.0,208.8 1492.0,215.3 1493.0,226.5 1494.0,218.3 1495.0,208.6 1496.0,204.6 1497.0,204.7 1498.0,202.3 1499.0,213.9 1500.0,226.0 1501.0,224.8 1502.0,212.9 1503.0,205.3 1504.0,203.5 1505.0,199.6 1506.0,202.0 1507.0,203.9 1508.0,207.7 1509.0,209.5 1510.0,209.7 1511.0,214.2 1512.0,214.1 1513.0,215.4 1514.0,209.8 1515.0,210.2 1516.0,208.7 1517.0,208.6 1518.0,204.9 1519.0,205.8 1520.0,208.1 1521.0,202.7 1522.0,205.5 1523.0,209.4 1524.0,216.6 1525.0,213.1 1526.0,208.8 1527.0,206.0 1528.0,208.4 1529.0,206.6 1530.0,209.1 1531.0,205.0 1532.0,208.6 1533.0,201.6 1534.0,204.7 1535.0,210.8 1536.0,212.8 1537.0,213.9 1538.0,206.1 1539.0,205.8 1540.0,200.9 1541.0,198.7 1542.0,203.2 1543.0,208.1 1544.0,209.5 1545.0,219.1 1546.0,224.1 1547.0,221.8 1548.0,209.0 1549.0,201.6 1550.0,204.3 1551.0,207.8 1552.0,204.6 1553.0,206.7 1554.0,218.0 1555.0,225.2 1556.0,223.0 1557.0,207.1 1558.0,193.6 1559.0,204.3 1560.0,209.5 1561.0,212.5 1562.0,220.6 1563.0,218.8 1564.0,210.8 1565.0,201.9 1566.0,198.4 1567.0,202.3 1568.0,210.1 1569.0,217.5 1570.0,220.2 1571.0,214.1 1572.0,210.9 1573.0,206.1 1574.0,209.2 1575.0,206.5 1576.0,204.2 1577.0,199.0 1578.0,204.0 1579.0,207.2 1580.0,214.5 1581.0,218.9 1582.0,216.2 1583.0,210.7 1584.0,205.4 1585.0,206.5 1586.0,208.7 1587.0,206.7 1588.0,199.5 1589.0,196.4 1590.0,200.7 1591.0,205.1 1592.0,212.4 1593.0,219.1 1594.0,231.6 1595.0,219.1 1596.0,206.3 1597.0,202.4 1598.0,207.7 1599.0,208.6 1600.0,206.4 1601.0,206.2 1602.0,206.6 1603.0,204.6 1604.0,207.6 1605.0,214.9 1606.0,223.2 1607.0,216.4 1608.0,210.0 1609.0,207.5 1610.0,204.6 1611.0,209.9 1612.0,214.2 1613.0,218.2 1614.0,209.4 1615.0,203.9 1616.0,204.1 1617.0,207.9 1618.0,208.6 1619.0,207.6 1620.0,205.3 1621.0,208.3 1622.0,209.0 1623.0,203.9 1624.0,209.2 1625.0,223.0 1626.0,217.9 1627.0,211.9 1628.0,209.4 1629.0,205.6 1630.0,201.5 1631.0,200.9 1632.0,202.8 1633.0,209.2 1634.0,209.7 1635.0,213.8 1636.0,219.5 1637.0,221.5 1638.0,216.9 1639.0,211.3 1640.0,206.1 1641.0,206.3 1642.0,196.4 1643.0,198.9 1644.0,208.9 1645.0,224.6 1646.0,227.4 1647.0,220.7 1648.0,208.3 1649.0,207.3 1650.0,204.7 1651.0,199.6 1652.0,205.0 1653.0,209.0 1654.0,211.6 1655.0,217.4 1656.0,221.8 1657.0,227.4 1658.0,217.9 1659.0,214.1 1660.0,205.7 1661.0,201.9 1662.0,196.9 1663.0,198.8 1664.0,206.8 1665.0,204.9 1666.0,205.9 1667.0,213.6 1668.0,224.1 1669.0,224.7 1670.0,213.0 1671.0,207.7 1672.0,207.5 1673.0,208.2 1674.0,206.4 1675.0,207.5 1676.0,208.5 1677.0,204.6 1678.0,205.5 1679.0,206.8 1680.0,206.9 1681.0,210.9 1682.0,217.4 1683.0,215.1 1684.0,213.5 1685.0,206.4 1686.0,207.2 1687.0,201.7 1688.0,201.7 1689.0,202.9 1690.0,207.9 1691.0,205.2 1692.0,209.3 1693.0,208.3 1694.0,216.3 1695.0,224.6 1696.0,225.9 1697.0,213.1 1698.0,202.1 1699.0,205.3 1700.0,206.9 1701.0,209.5 1702.0,208.7 1703.0,208.8 1704.0,206.5 1705.0,206.7 1706.0,211.0 1707.0,217.8 1708.0,223.9 1709.0,219.7 1710.0,213.4 1711.0,209.0 1712.0,206.1 1713.0,203.0 1715.0,236.0 1717.0,250.0 1719.0,242.8 1720.0,252.9 1721.0,255.2 1722.0,250.6 1723.0,245.8 1724.0,246.8 1725.0,244.1 1726.0,249.6 1727.0,243.2 1728.0,240.6 1729.0,241.3 1730.0,242.2 1731.0,243.6 1732.0,241.5 1733.0,247.1 1734.0,241.7 1735.0,236.4 1736.0,238.4 1737.0,242.1 1738.0,241.2 1739.0,236.9 1740.0,242.7 1741.0,242.2 1742.0,240.8 1743.0,247.6 1744.0,244.7 1745.0,248.0 1746.0,240.6 1747.0,248.2 1748.0,250.8 1749.0,258.6 1750.0,250.8 1751.0,257.0 1752.0,249.3 1753.0,256.7 1754.0,266.1 1755.0,259.0 1756.0,260.1 1757.0,257.5 1758.0,256.6 1759.0,255.7 1760.0,268.0 1761.0,267.8 1762.0,260.9 1763.0,257.5 1764.0,259.8 1765.0,256.5 1766.0,259.0 1767.0,268.3 1768.0,258.9 1769.0,258.6 1770.0,264.1 1771.0,267.7 1772.0,264.2 1773.0,260.0 1774.0,257.9 1775.0,263.1 1776.0,264.5 1777.0,259.9 1778.0,268.2 1779.0,260.8 1780.0,259.1 1781.0,255.0 1782.0,263.4 1783.0,265.8 1784.0,255.5 1785.0,255.7 1786.0,246.4 1787.0,252.5 1788.0,244.4 1789.0,245.6 1790.0,249.9 1791.0,240.5 1792.0,243.1 1793.0,242.2 1794.0,241.8 1795.0,235.3 1796.0,238.0 1797.0,239.1 1798.0,234.2 1799.0,233.8 1800.0,240.1 1801.0,243.3 1802.0,246.9 1803.0,240.0 1804.0,241.3 1805.0,246.2 1806.0,255.2 1807.0,257.9 1808.0,252.0 1809.0,254.4 1810.0,255.2 1811.0,252.6 1812.0,248.2 1813.0,245.3 1814.0,246.6 1815.0,239.7 1816.0,234.6 1817.0,239.3 1818.0,231.9 1819.0,239.7 1819.0,236.0" fill="none" stroke="#ececec" stroke-width="1.8" stroke-linejoin="round"/><line x1="972.5" y1="94" x2="972.5" y2="316" stroke="#b82a24" stroke-width="1.6"/><line x1="1396.5" y1="94" x2="1396.5" y2="315" stroke="#e8e030" stroke-width="1.2"/></svg>
<div class="t" style="left:917.57px;top:85.07px;font-size:20px;line-height:20px;color:#ffffff;">40.0</div>
<div class="t" style="left:917.57px;top:128.97px;font-size:20px;line-height:20px;color:#ffffff;">20.0</div>
<div class="t" style="left:928.70px;top:172.87px;font-size:20px;line-height:20px;color:#ffffff;">0.0</div>
<div class="t" style="left:910.91px;top:216.77px;font-size:20px;line-height:20px;color:#ffffff;">-20.0</div>
<div class="t" style="left:910.91px;top:260.67px;font-size:20px;line-height:20px;color:#ffffff;">-40.0</div>
<div class="t" style="left:910.91px;top:304.57px;font-size:20px;line-height:20px;color:#ffffff;">-60.0</div>
<div class="t" style="left:973.38px;top:329.07px;font-size:20px;line-height:20px;color:#ffffff;">212.4</div>
<div class="t" style="left:1056.13px;top:329.07px;font-size:20px;line-height:20px;color:#ffffff;">212.6</div>
<div class="t" style="left:1138.88px;top:329.07px;font-size:20px;line-height:20px;color:#ffffff;">212.8</div>
<div class="t" style="left:1229.97px;top:329.07px;font-size:20px;line-height:20px;color:#ffffff;">213</div>
<div class="t" style="left:1304.38px;top:329.07px;font-size:20px;line-height:20px;color:#ffffff;">213.2</div>
<div class="t" style="left:1387.13px;top:329.07px;font-size:20px;line-height:20px;color:#ffffff;">213.4</div>
<div class="t" style="left:1469.88px;top:329.07px;font-size:20px;line-height:20px;color:#ffffff;">213.6</div>
<div class="t" style="left:1552.63px;top:329.07px;font-size:20px;line-height:20px;color:#ffffff;">213.8</div>
<div class="t" style="left:1643.72px;top:329.07px;font-size:20px;line-height:20px;color:#ffffff;">214</div>
<div class="t" style="left:1718.13px;top:329.07px;font-size:20px;line-height:20px;color:#ffffff;">214.2</div>
<div class="t" style="left:1304.30px;top:358.75px;font-size:22.5px;line-height:22.5px;color:#ffffff;transform:scaleX(1.0530);transform-origin:0 0;">Frequency (MHz)</div>
<div class="t" style="left:869px;top:206px;font-size:23px;line-height:23px;color:#fff;transform:translate(-50%,-50%) rotate(-90deg) scaleX(1.04);">Magnitude (dB)</div>
<div style="left:0px;top:405px;width:134px;height:59px;background:#242424;"></div>
<div style="left:134px;top:405px;width:1px;height:59px;background:#c8c8c8;"></div>
<div style="left:135px;top:405px;width:308px;height:59px;background:#196419;"></div>
<div style="left:443px;top:405px;width:291px;height:59px;background:#2d2d2d;"></div>
<div style="left:734px;top:405px;width:4px;height:59px;background:#eeeeee;"></div>
<div style="left:738px;top:405px;width:1120px;height:59px;background:#262626;"></div>
<div style="left:29px;top:420px;width:90px;height:33px;background:transparent;border:1.5px solid #8c8c8c;border-radius:4px;box-sizing:border-box;"></div>
<div class="t" style="left:31.50px;top:425.84px;font-size:20.5px;line-height:20.5px;color:#ffffff;transform:scaleX(0.9041);transform-origin:0 0;">10C</div>
<svg style="left:85px;top:429px" width="18" height="14"><polygon points="2,2 16,2 9,10" fill="#fff"/></svg>
<div class="t" style="left:158.40px;top:424.68px;font-size:24px;line-height:24px;color:#78be6e;transform:scaleX(0.9330);transform-origin:0 0;">EId: 1152</div>
<div class="t" style="left:284.50px;top:424.68px;font-size:24px;line-height:24px;color:#6ec81e;transform:scaleX(0.9564);transform-origin:0 0;">NDR MV NB</div>
<div class="t" style="left:444.80px;top:424.68px;font-size:24px;line-height:24px;color:#ffffff;transform:scaleX(0.9695);transform-origin:0 0;">2022-10-21  08:00:14 Z</div>
<div style="left:753px;top:420px;width:38px;height:33px;background:transparent;border:1.5px solid #8c8c8c;border-radius:4px;box-sizing:border-box;"></div>
<svg style="left:762px;top:429px" width="20" height="14"><polygon points="2,2 18,2 10,10" fill="#fff"/></svg>
<div style="left:826px;top:421px;width:34px;height:34px;border-radius:50%;background:#2a6299"></div>
<div style="left:836px;top:431px;width:14px;height:14px;border-radius:50%;background:#ff0000"></div>
<div style="left:878.5px;top:421px;width:34px;height:34px;border-radius:50%;background:#284a6a"></div>
<div style="left:889px;top:430px;width:13px;height:15px;background:#141414;"></div>
<div style="left:1788px;top:418px;width:80px;height:33px;background:transparent;border:1.5px solid #8c8c8c;border-radius:4px;box-sizing:border-box;"></div>
<div class="t" style="left:1789.50px;top:424.50px;font-size:21.5px;line-height:21.5px;color:#ffffff;transform:scaleX(0.8709);transform-origin:0 0;">DAB</div>
<svg style="left:1843px;top:428px" width="18" height="14"><polygon points="2,2 16,2 9,10" fill="#fff"/></svg>
<div class="t" style="left:-1.50px;top:475.22px;font-size:29.5px;line-height:29.5px;color:#ecf03c;transform:scaleX(0.9803);transform-origin:0 0;">No Service Selected</div>
<div class="t" style="left:-0.50px;top:526.86px;font-size:24.5px;line-height:24.5px;color:#ffffff;transform:scaleX(0.9575);transform-origin:0 0;">NDR 1 MV NB</div>
<div class="t" style="left:-0.50px;top:564.71px;font-size:24.5px;line-height:24.5px;color:#ffffff;transform:scaleX(0.9610);transform-origin:0 0;">NDR 2 MV</div>
<div class="t" style="left:-0.50px;top:602.56px;font-size:24.5px;line-height:24.5px;color:#ffffff;transform:scaleX(0.9346);transform-origin:0 0;">NDR Blue</div>
<div class="t" style="left:-0.50px;top:640.41px;font-size:24.5px;line-height:24.5px;color:#ffffff;transform:scaleX(0.9743);transform-origin:0 0;">NDR Info MV</div>
<div class="t" style="left:-0.50px;top:678.26px;font-size:24.5px;line-height:24.5px;color:#ffffff;transform:scaleX(0.9515);transform-origin:0 0;">NDR Info Spezial</div>
<div class="t" style="left:-0.50px;top:716.11px;font-size:24.5px;line-height:24.5px;color:#ffffff;transform:scaleX(0.9718);transform-origin:0 0;">NDR Kultur</div>
<div class="t" style="left:-0.50px;top:753.96px;font-size:24.5px;line-height:24.5px;color:#ffffff;transform:scaleX(0.9388);transform-origin:0 0;">NDR Schlager</div>
<div class="t" style="left:-0.50px;top:791.81px;font-size:24.5px;line-height:24.5px;color:#ffffff;transform:scaleX(0.9156);transform-origin:0 0;">N-JOY</div>
<div class="t" style="left:300.00px;top:474.82px;font-size:29.5px;line-height:29.5px;color:#ffffff;transform:scaleX(0.9759);transform-origin:0 0;">Service Quality</div>
<div class="t" style="left:306.50px;top:541.72px;font-size:21px;line-height:21px;color:#ffffff;transform:scaleX(0.9093);transform-origin:0 0;">SNR (dB)</div>
<div style="left:486px;top:532px;width:60px;height:38px;background:#878787;"></div>
<div style="left:486px;top:532px;width:31px;height:38px;background:#008000;"></div>
<div class="t" style="left:501.00px;top:541.91px;font-size:19px;line-height:19px;color:#ffffff;transform:scaleX(0.8113);transform-origin:0 0;">18,1</div>
<div class="t" style="left:306.50px;top:587.82px;font-size:21px;line-height:21px;color:#ffffff;transform:scaleX(0.9189);transform-origin:0 0;">FIC (ok %)</div>
<div style="left:486px;top:578px;width:60px;height:38px;background:#878787;"></div>
<div style="left:486px;top:578px;width:60px;height:38px;background:#008000;"></div>
<div class="t" style="left:503.14px;top:588.01px;font-size:19px;line-height:19px;color:#ffffff;transform:scaleX(0.8113);transform-origin:0 0;">100</div>
<div class="t" style="left:306.50px;top:633.92px;font-size:21px;line-height:21px;color:#ffffff;transform:scaleX(0.9197);transform-origin:0 0;">RS (ok %)</div>
<div style="left:486px;top:624px;width:60px;height:38px;background:#878787;"></div>
<div class="t" style="left:306.50px;top:680.02px;font-size:21px;line-height:21px;color:#ffffff;">Null Symbol</div>
<div style="left:486px;top:670px;width:60px;height:38px;background:#878787;"></div>
<div style="left:486px;top:670px;width:60px;height:38px;background:#008000;"></div>
<div class="t" style="left:306.50px;top:726.12px;font-size:21px;line-height:21px;color:#ffffff;transform:scaleX(0.9754);transform-origin:0 0;">SymbolTime (ms)</div>
<div style="left:486px;top:716px;width:60px;height:38px;background:#878787;"></div>
<div style="left:486px;top:716px;width:15px;height:38px;background:#008000;"></div>
<div class="t" style="left:501.00px;top:726.31px;font-size:19px;line-height:19px;color:#ffffff;transform:scaleX(0.8113);transform-origin:0 0;">0,36</div>
<div class="t" style="left:306.50px;top:772.22px;font-size:21px;line-height:21px;color:#ffffff;transform:scaleX(0.9587);transform-origin:0 0;">FrameTime (ms)</div>
<div style="left:486px;top:762px;width:60px;height:38px;background:#878787;"></div>
<div style="left:486px;top:762px;width:38px;height:38px;background:#008000;"></div>
<div class="t" style="left:501.00px;top:772.41px;font-size:19px;line-height:19px;color:#ffffff;transform:scaleX(0.8113);transform-origin:0 0;">96,0</div>
<div style="left:579px;top:476px;width:89px;height:40px;background:#888888;border-top-right-radius:13px;border-top-left-radius:4px;box-sizing:border-box;"></div>
<div class="t" style="left:599.40px;top:487.23px;font-size:25px;line-height:25px;color:#e2e2e2;transform:scaleX(0.9068);transform-origin:0 0;">Sync</div>
<div style="left:669px;top:476px;width:65px;height:40px;background:#1b5784;border-top-right-radius:13px;border-top-left-radius:4px;box-sizing:border-box;border-top:1px solid #5a8ab0;border-right:1px solid #5a8ab0;"></div>
<div class="t" style="left:689.00px;top:487.23px;font-size:25px;line-height:25px;color:#ffffff;transform:scaleX(0.9087);transform-origin:0 0;">TII</div>
<div style="left:735px;top:476px;width:104px;height:40px;background:#888888;border-top-right-radius:13px;border-top-left-radius:4px;box-sizing:border-box;"></div>
<div class="t" style="left:754.70px;top:487.23px;font-size:25px;line-height:25px;color:#e2e2e2;transform:scaleX(1.0510);transform-origin:0 0;">Audio</div>
<div style="left:841px;top:476px;width:86px;height:40px;background:#888888;border-top-right-radius:13px;border-top-left-radius:4px;box-sizing:border-box;"></div>
<div class="t" style="left:861.00px;top:487.23px;font-size:25px;line-height:25px;color:#e2e2e2;transform:scaleX(0.9260);transform-origin:0 0;">AAC</div>
<div style="left:928px;top:476px;width:129px;height:40px;background:#888888;border-top-right-radius:13px;border-top-left-radius:4px;box-sizing:border-box;"></div>
<div class="t" style="left:947.80px;top:487.23px;font-size:25px;line-height:25px;color:#e2e2e2;transform:scaleX(1.0330);transform-origin:0 0;">Options</div>
<div style="left:619px;top:532px;width:14px;height:14px;border-radius:50%;background:#ff0000"></div>
<div style="left:663px;top:532px;width:13px;height:13px;background:#0e2a48;"></div>
<div style="left:590px;top:561px;width:371px;height:1px;background:#9fb8d0;"></div>
<div style="left:976px;top:516px;width:1px;height:464px;background:#4f80a8;"></div>
<div class="t" style="left:984.20px;top:546.80px;font-size:21.5px;line-height:21.5px;color:#ffffff;transform:scaleX(0.9518);transform-origin:0 0;">Threshold</div>
<div class="t" style="left:590.50px;top:590.17px;font-size:22px;line-height:22px;color:#ffffff;transform:scaleX(0.9855);transform-origin:0 0;">Pattern</div>
<div class="t" style="left:691.30px;top:590.17px;font-size:22px;line-height:22px;color:#ffffff;transform:scaleX(1.0222);transform-origin:0 0;">MainId</div>
<div class="t" style="left:789.90px;top:590.17px;font-size:22px;line-height:22px;color:#ffffff;transform:scaleX(0.9793);transform-origin:0 0;">SubId</div>
<div class="t" style="left:877.60px;top:590.17px;font-size:22px;line-height:22px;color:#ffffff;">Strength</div>
<div style="left:590px;top:615px;width:371px;height:1px;background:#b8c8d8;"></div>
<div class="t" style="left:593.00px;top:636.97px;font-size:20px;line-height:20px;color:#ffffff;transform:scaleX(0.9752);transform-origin:0 0;">0x5c</div>
<div class="t" style="left:693.40px;top:636.97px;font-size:20px;line-height:20px;color:#ffffff;transform:scaleX(0.9889);transform-origin:0 0;">24</div>
<div class="t" style="left:793.00px;top:636.97px;font-size:20px;line-height:20px;color:#ffffff;transform:scaleX(0.9440);transform-origin:0 0;">5</div>
<div class="t" style="left:879.70px;top:636.97px;font-size:20px;line-height:20px;color:#ffffff;transform:scaleX(0.9711);transform-origin:0 0;">0.95</div>
<div class="t" style="left:593.00px;top:674.02px;font-size:20px;line-height:20px;color:#ffffff;transform:scaleX(0.9752);transform-origin:0 0;">0x5c</div>
<div class="t" style="left:693.40px;top:674.02px;font-size:20px;line-height:20px;color:#ffffff;transform:scaleX(0.9889);transform-origin:0 0;">24</div>
<div class="t" style="left:793.00px;top:674.02px;font-size:20px;line-height:20px;color:#ffffff;transform:scaleX(0.9440);transform-origin:0 0;">4</div>
<div class="t" style="left:879.70px;top:674.02px;font-size:20px;line-height:20px;color:#ffffff;transform:scaleX(0.9711);transform-origin:0 0;">0.42</div>
<div class="t" style="left:593.00px;top:711.07px;font-size:20px;line-height:20px;color:#ffffff;transform:scaleX(0.9752);transform-origin:0 0;">0x5c</div>
<div class="t" style="left:693.40px;top:711.07px;font-size:20px;line-height:20px;color:#ffffff;transform:scaleX(0.9889);transform-origin:0 0;">24</div>
<div class="t" style="left:793.00px;top:711.07px;font-size:20px;line-height:20px;color:#ffffff;transform:scaleX(0.9440);transform-origin:0 0;">3</div>
<div class="t" style="left:879.70px;top:711.07px;font-size:20px;line-height:20px;color:#ffffff;transform:scaleX(0.9711);transform-origin:0 0;">0.39</div>
<div style="left:1024px;top:609px;width:3px;height:144px;background:#e2e2e2;border-radius:1px;"></div>
<div style="left:1016.5px;top:752.4px;width:19px;height:19px;border-radius:50%;background:linear-gradient(90deg,#f0f0f0 0%,#b8b8b8 50%,#6a6a6a 100%);box-shadow:0 0 0 1px #3a4a5a"></div>
<div class="t" style="left:1005.20px;top:784.62px;font-size:21px;line-height:21px;color:#ffffff;transform:scaleX(0.9199);transform-origin:0 0;">0.02</div>
<div class="t" style="left:1330.00px;top:469.07px;font-size:20px;line-height:20px;color:#ffffff;transform:scaleX(1.0668);transform-origin:0 0;">Channel Impulse Response (CIR)</div>
<svg style="left:1830px;top:470px" width="24" height="22"><polygon points="3,3 21,3 12,19.5" fill="none" stroke="#d4e2f0" stroke-width="1.1"/></svg>
<div style="left:1109.0px;top:513.0px;width:19.0px;height:19.0px;border-radius:50%;background:#e2e2e2"></div>
<div class="t" style="left:1135.00px;top:515.26px;font-size:18px;line-height:18px;color:#ffffff;transform:scaleX(0.8925);transform-origin:0 0;">Freeze</div>
<div style="left:1215.4px;top:513.0px;width:19.0px;height:19.0px;border-radius:50%;background:#e2e2e2"></div>
<div class="t" style="left:1241.70px;top:515.26px;font-size:18px;line-height:18px;color:#ffffff;transform:scaleX(0.9748);transform-origin:0 0;">Gradient</div>
<div class="t" style="left:1116.80px;top:576.06px;font-size:18px;line-height:18px;color:#ffffff;transform:scaleX(0.9837);transform-origin:0 0;">Smoothing Level</div>
<div style="left:1118.5px;top:603.5px;width:2px;height:5.5px;background:#a0a0a0;"></div>
<div style="left:1137.5px;top:603.5px;width:2px;height:5.5px;background:#a0a0a0;"></div>
<div style="left:1157.5px;top:603.5px;width:2px;height:5.5px;background:#a0a0a0;"></div>
<div style="left:1177.5px;top:603.5px;width:2px;height:5.5px;background:#a0a0a0;"></div>
<div style="left:1196.5px;top:603.5px;width:2px;height:5.5px;background:#a0a0a0;"></div>
<div style="left:1216.5px;top:603.5px;width:2px;height:5.5px;background:#a0a0a0;"></div>
<div style="left:1235.5px;top:603.5px;width:2px;height:5.5px;background:#a0a0a0;"></div>
<div style="left:1255.5px;top:603.5px;width:2px;height:5.5px;background:#a0a0a0;"></div>
<div style="left:1275.5px;top:603.5px;width:2px;height:5.5px;background:#a0a0a0;"></div>
<div style="left:1294.5px;top:603.5px;width:2px;height:5.5px;background:#a0a0a0;"></div>
<div style="left:1314.5px;top:603.5px;width:2px;height:5.5px;background:#a0a0a0;"></div>
<div style="left:1109px;top:617.8px;width:206px;height:3px;background:#e6e6e6;border-radius:2px;"></div>
<div style="left:1148.8px;top:610.1px;width:18.4px;height:18.4px;border-radius:50%;background:linear-gradient(180deg,#f2f2f2 0%,#c4c4c4 30%,#9a9a9a 60%,#5a5a5a 100%);box-shadow:0 0 1.5px #000"></div>
<div class="t" style="left:1116.80px;top:656.76px;font-size:18px;line-height:18px;color:#ffffff;transform:scaleX(0.9838);transform-origin:0 0;">Zoom X</div>
<div style="left:1109px;top:693.0px;width:206px;height:3px;background:#e6e6e6;border-radius:2px;"></div>
<div style="left:1110.5px;top:685.3px;width:18.4px;height:18.4px;border-radius:50%;background:linear-gradient(180deg,#f2f2f2 0%,#c4c4c4 30%,#9a9a9a 60%,#5a5a5a 100%);box-shadow:0 0 1.5px #000"></div>
<div style="left:1093px;top:495px;width:248px;height:240px;overflow:hidden"><div class="t" style="left:23.80px;top:235.76px;font-size:18px;line-height:18px;color:#ffffff;transform:scaleX(0.9889);transform-origin:0 0;">Zoom Y</div></div>
<div style="left:1325px;top:497px;width:7px;height:131px;background:#b4b4b4;border-radius:4px;"></div>
<div style="left:1341px;top:495px;width:1px;height:240px;background:#383838;"></div>
<div style="left:1093px;top:735px;width:765px;height:8px;background:#8a8a8a;"></div>
<svg style="left:1342px;top:495px" width="516" height="240" viewBox="1342 495 516 240"><rect x="1482" y="516" width="36.6" height="139.3" fill="#474747"/><line x1="1455" y1="515.5" x2="1842" y2="515.5" stroke="rgba(255,255,255,0.6)" stroke-width="1"/><line x1="1455" y1="544.5" x2="1842" y2="544.5" stroke="rgba(255,255,255,0.6)" stroke-width="1"/><line x1="1455" y1="572.5" x2="1842" y2="572.5" stroke="rgba(255,255,255,0.6)" stroke-width="1"/><line x1="1455" y1="600.5" x2="1842" y2="600.5" stroke="rgba(255,255,255,0.6)" stroke-width="1"/><line x1="1455" y1="628.5" x2="1842" y2="628.5" stroke="rgba(255,255,255,0.6)" stroke-width="1"/><line x1="1455" y1="655.5" x2="1842" y2="655.5" stroke="rgba(255,255,255,0.6)" stroke-width="1"/><line x1="1472.5" y1="516" x2="1472.5" y2="655" stroke="rgba(255,255,255,0.6)" stroke-width="1"/><line x1="1498.5" y1="516" x2="1498.5" y2="655" stroke="rgba(255,255,255,0.6)" stroke-width="1"/><line x1="1524.5" y1="516" x2="1524.5" y2="655" stroke="rgba(255,255,255,0.6)" stroke-width="1"/><line x1="1550.5" y1="516" x2="1550.5" y2="655" stroke="rgba(255,255,255,0.6)" stroke-width="1"/><line x1="1576.5" y1="516" x2="1576.5" y2="655" stroke="rgba(255,255,255,0.6)" stroke-width="1"/><line x1="1602.5" y1="516" x2="1602.5" y2="655" stroke="rgba(255,255,255,0.6)" stroke-width="1"/><line x1="1628.5" y1="516" x2="1628.5" y2="655" stroke="rgba(255,255,255,0.6)" stroke-width="1"/><line x1="1654.5" y1="516" x2="1654.5" y2="655" stroke="rgba(255,255,255,0.6)" stroke-width="1"/><line x1="1680.5" y1="516" x2="1680.5" y2="655" stroke="rgba(255,255,255,0.6)" stroke-width="1"/><line x1="1706.5" y1="516" x2="1706.5" y2="655" stroke="rgba(255,255,255,0.6)" stroke-width="1"/><line x1="1732.5" y1="516" x2="1732.5" y2="655" stroke="rgba(255,255,255,0.6)" stroke-width="1"/><line x1="1758.5" y1="516" x2="1758.5" y2="655" stroke="rgba(255,255,255,0.6)" stroke-width="1"/><line x1="1784.5" y1="516" x2="1784.5" y2="655" stroke="rgba(255,255,255,0.6)" stroke-width="1"/><line x1="1810.5" y1="516" x2="1810.5" y2="655" stroke="rgba(255,255,255,0.6)" stroke-width="1"/><line x1="1836.5" y1="516" x2="1836.5" y2="655" stroke="rgba(255,255,255,0.6)" stroke-width="1"/><rect x="1455" y="515.5" width="386.5" height="140" fill="none" stroke="#a8a8a8" stroke-width="1.8"/><line x1="1518.6" y1="516" x2="1518.6" y2="655" stroke="#f0e040" stroke-width="1" stroke-dasharray="1.2,1.8"/><polyline points="1456.0,619.2 1456.6,619.4 1457.2,636.1 1457.8,611.1 1458.4,618.4 1459.0,615.0 1459.6,628.2 1460.2,644.3 1460.8,624.9 1461.4,644.4 1462.0,629.2 1462.6,624.1 1463.2,643.2 1463.8,628.2 1464.4,643.1 1465.0,626.3 1465.6,617.1 1466.2,625.2 1466.8,620.9 1467.4,609.8 1468.0,625.1 1468.6,639.2 1469.2,627.5 1469.8,627.6 1470.4,622.9 1471.0,640.9 1471.6,630.1 1472.2,641.1 1472.8,628.8 1473.4,626.8 1474.0,633.7 1474.6,627.5 1475.2,632.2 1475.8,639.9 1476.4,624.1 1477.0,633.8 1477.6,637.7 1478.2,635.8 1478.8,645.6 1479.4,632.1 1480.0,615.1 1480.6,617.2 1481.2,621.8 1481.8,626.2 1482.4,631.8 1483.0,630.0 1483.6,629.2 1484.2,630.0 1484.8,623.4 1485.4,631.1 1486.0,633.7 1486.6,639.6 1487.2,630.1 1487.8,624.6 1488.4,619.0 1489.0,618.3 1489.6,636.6 1490.2,639.7 1490.8,642.7 1491.4,627.9 1492.0,615.9 1492.6,628.9 1493.2,624.5 1493.8,630.4 1494.4,638.2 1495.0,625.4 1495.6,633.1 1496.2,631.2 1496.8,619.5 1497.4,638.1 1498.0,621.5 1498.6,617.1 1499.2,626.3 1499.8,636.5 1500.4,623.1 1501.0,645.4 1501.6,637.4 1502.2,628.7 1502.8,614.6 1503.4,631.2 1504.0,621.8 1504.6,636.8 1505.2,619.5 1505.8,639.7 1506.4,646.6 1507.0,625.2 1507.6,635.2 1508.2,640.3 1508.8,623.7 1509.4,616.8 1510.0,629.9 1510.6,618.3 1511.2,618.8 1511.8,618.9 1512.4,632.4 1513.0,628.8 1513.6,630.2 1514.2,648.4 1514.8,628.4 1515.4,630.5 1516.0,639.2 1516.6,632.5 1517.0,600.0 1518.3,561.0 1519.5,590.0 1521.0,583.0 1522.0,596.0 1523.0,586.0 1524.0,600.0 1526.0,592.0 1528.0,612.0 1529.0,620.0 1530.0,605.0 1532.0,580.0 1533.0,598.0 1535.0,591.0 1537.0,606.0 1538.0,600.0 1540.0,634.0 1542.0,612.0 1543.0,605.0 1545.0,613.0 1547.0,603.0 1548.0,595.0 1549.0,590.0 1550.3,541.0 1551.5,585.0 1553.0,592.0 1554.0,589.0 1556.0,605.0 1557.0,598.0 1559.0,612.0 1560.0,606.0 1562.0,628.0 1563.0,612.0 1565.0,633.0 1567.0,615.0 1569.0,598.0 1570.0,590.0 1571.4,560.0 1572.5,592.0 1574.0,603.0 1576.0,612.0 1577.0,600.0 1578.6,584.0 1579.5,612.0 1581.0,625.0 1582.0,614.0 1584.0,637.0 1585.0,618.0 1587.0,630.0 1589.0,611.0 1590.0,621.9 1590.6,610.9 1591.2,626.1 1591.8,616.7 1592.4,622.9 1593.0,627.2 1593.6,632.9 1594.2,619.7 1594.8,646.7 1595.4,631.0 1596.0,620.1 1596.6,625.1 1597.2,624.4 1597.8,631.1 1598.4,637.1 1599.0,624.1 1599.6,620.5 1600.2,647.3 1600.8,623.5 1601.4,634.0 1602.0,626.6 1602.6,645.2 1603.2,634.8 1603.8,628.6 1604.4,628.9 1605.0,625.5 1605.6,626.5 1606.2,637.2 1606.8,634.2 1607.4,630.2 1608.0,641.1 1608.6,630.1 1609.2,613.7 1609.8,630.8 1610.4,625.2 1611.0,641.6 1611.6,626.2 1612.2,640.9 1612.8,622.7 1613.4,629.1 1614.0,630.6 1614.6,626.6 1615.2,623.5 1615.8,628.9 1616.4,628.1 1617.0,625.3 1617.6,625.4 1618.2,631.1 1618.8,631.2 1619.4,630.1 1620.0,623.5 1620.6,631.5 1621.2,639.2 1621.8,632.7 1622.4,619.8 1623.0,625.7 1623.6,625.3 1624.2,628.6 1624.8,626.7 1625.4,619.1 1626.0,624.7 1626.6,626.1 1627.2,640.1 1627.8,631.1 1628.4,629.6 1629.0,632.4 1629.6,624.4 1630.2,624.4 1630.8,626.1 1631.4,631.5 1632.0,634.0 1632.6,622.2 1633.2,643.6 1633.8,630.0 1634.4,636.9 1635.0,629.0 1635.6,632.3 1636.2,631.4 1636.8,632.1 1637.4,633.4 1638.0,627.2 1638.6,629.2 1639.2,625.4 1639.8,622.0 1640.4,623.8 1641.0,608.6 1641.6,613.7 1642.2,640.0 1642.8,627.8 1643.4,617.9 1644.0,631.0 1644.6,623.1 1645.2,637.5 1645.8,631.5 1646.4,642.5 1647.0,635.5 1647.6,635.7 1648.2,631.2 1648.8,630.8 1649.4,629.6 1650.0,626.1 1650.6,628.4 1651.2,628.1 1651.8,621.0 1652.4,622.0 1653.0,635.9 1653.6,631.3 1654.2,624.6 1654.8,631.6 1655.4,623.5 1656.0,620.7 1656.6,633.0 1657.2,630.8 1657.8,634.5 1658.4,629.1 1659.0,620.1 1659.6,616.9 1660.2,633.6 1660.8,627.6 1661.4,641.7 1662.0,628.2 1662.6,639.5 1663.2,631.2 1663.8,629.4 1664.4,625.1 1665.0,636.4 1665.6,634.2 1666.2,619.0 1666.8,613.4 1667.4,634.5 1668.0,621.8 1668.6,630.8 1669.2,638.3 1669.8,627.2 1670.4,630.8 1671.0,628.8 1671.6,630.2 1672.2,634.5 1672.8,629.3 1673.4,635.5 1674.0,623.8 1674.6,631.6 1675.2,638.1 1675.8,635.5 1676.4,623.3 1677.0,626.4 1677.6,625.2 1678.2,615.6 1678.8,618.2 1679.4,630.6 1680.0,625.3 1680.6,619.2 1681.2,625.4 1681.8,621.3 1682.4,618.7 1683.0,623.3 1683.6,628.4 1684.2,626.4 1684.8,623.9 1685.4,616.6 1686.0,633.1 1686.6,635.0 1687.2,633.4 1687.8,638.2 1688.4,637.3 1689.0,635.8 1689.6,630.4 1690.2,634.8 1690.8,621.0 1691.4,620.2 1692.0,637.2 1692.6,621.2 1693.2,627.2 1693.8,641.3 1694.4,620.2 1695.0,625.4 1695.6,624.9 1696.2,618.5 1696.8,623.3 1697.4,641.4 1698.0,633.3 1698.6,622.3 1699.2,634.6 1699.8,636.9 1700.4,632.7 1701.0,618.6 1701.6,631.6 1702.2,631.0 1702.8,624.1 1703.4,618.5 1704.0,636.0 1704.6,635.4 1705.2,631.5 1705.8,628.1 1706.4,622.5 1707.0,629.9 1707.6,618.2 1708.2,629.1 1708.8,633.9 1709.4,622.1 1710.0,634.0 1710.6,631.5 1711.2,616.7 1711.8,651.8 1712.4,628.2 1713.0,630.0 1713.6,633.6 1714.2,630.6 1714.8,625.8 1715.4,646.1 1716.0,630.3 1716.6,621.6 1717.2,630.5 1717.8,629.3 1718.4,634.9 1719.0,625.5 1719.6,630.4 1720.2,621.8 1720.8,628.0 1721.4,636.8 1722.0,626.4 1722.6,629.7 1723.2,642.1 1723.8,630.5 1724.4,633.6 1725.0,621.1 1725.6,620.6 1726.2,637.7 1726.8,631.9 1727.4,630.8 1728.0,613.2 1728.6,620.1 1729.2,628.6 1729.8,609.6 1730.4,619.4 1731.0,637.8 1731.6,628.2 1732.2,630.2 1732.8,623.1 1733.4,635.3 1734.0,627.6 1734.6,633.0 1735.2,622.2 1735.8,627.8 1736.4,633.2 1737.0,634.0 1737.6,631.8 1738.2,630.1 1738.8,627.0 1739.4,641.1 1740.0,621.5 1740.6,635.3 1741.2,632.5 1741.8,626.4 1742.4,631.1 1743.0,639.8 1743.6,637.3 1744.2,636.5 1744.8,631.0 1745.4,630.6 1746.0,620.2 1746.6,617.1 1747.2,637.5 1747.8,621.5 1748.4,635.4 1749.0,624.5 1749.6,629.8 1750.2,631.9 1750.8,626.5 1751.4,625.5 1752.0,615.2 1752.6,622.1 1753.2,636.2 1753.8,623.8 1754.4,628.1 1755.0,632.2 1755.6,622.1 1756.2,621.7 1756.8,636.9 1757.4,617.2 1758.0,621.6 1758.6,620.5 1759.2,639.2 1759.8,633.4 1760.4,636.1 1761.0,644.2 1761.6,611.0 1762.2,631.5 1762.8,644.4 1763.4,622.1 1764.0,626.2 1764.6,628.3 1765.2,611.1 1765.8,623.1 1766.4,621.7 1767.0,635.7 1767.6,630.5 1768.2,630.8 1768.8,621.6 1769.4,625.3 1770.0,629.5 1770.6,619.5 1771.2,648.4 1771.8,643.6 1772.4,618.9 1773.0,619.6 1773.6,628.9 1774.2,635.6 1774.8,624.2 1775.4,637.0 1776.0,627.7 1776.6,635.2 1777.2,632.6 1777.8,642.0 1778.4,623.8 1779.0,641.7 1779.6,622.9 1780.2,638.6 1780.8,617.5 1781.4,635.9 1782.0,621.2 1782.6,627.2 1783.2,630.0 1783.8,642.1 1784.4,628.9 1785.0,630.0 1785.6,623.5 1786.2,631.4 1786.8,619.0 1787.4,632.6 1788.0,630.1 1788.6,629.4 1789.2,644.0 1789.8,621.5 1790.4,633.9 1791.0,633.8 1791.6,633.7 1792.2,628.7 1792.8,620.9 1793.4,631.6 1794.0,637.7 1794.6,644.0 1795.2,609.6 1795.8,631.2 1796.4,624.1 1797.0,618.2 1797.6,623.5 1798.2,620.3 1798.8,626.5 1799.4,633.7 1800.0,632.6 1800.6,623.4 1801.2,628.8 1801.8,640.2 1802.4,641.8 1803.0,625.5 1803.6,631.4 1804.2,629.1 1804.8,614.0 1805.4,633.7 1806.0,616.9 1806.6,633.8 1807.2,624.2 1807.8,627.9 1808.4,623.9 1809.0,632.4 1809.6,635.0 1810.2,634.9 1810.8,637.1 1811.4,631.1 1812.0,626.4 1812.6,629.8 1813.2,623.7 1813.8,644.3 1814.4,634.5 1815.0,632.4 1815.6,633.0 1816.2,624.2 1816.8,629.8 1817.4,634.7 1818.0,615.5 1818.6,628.4 1819.2,622.9 1819.8,633.1 1820.4,622.7 1821.0,636.1 1821.6,632.2 1822.2,629.9 1822.8,634.6 1823.4,624.9 1824.0,626.1 1824.6,621.2 1825.2,632.5 1825.8,636.1 1826.4,620.6 1827.0,637.9 1827.6,632.7 1828.2,628.9 1828.8,632.3 1829.4,635.4 1830.0,620.1 1830.6,616.5 1831.2,629.3 1831.8,637.2 1832.4,626.8 1833.0,635.0 1833.6,623.4 1834.2,629.0 1834.8,637.1 1835.4,624.2 1836.0,627.0 1836.6,633.9 1837.2,640.7 1837.8,622.6 1838.4,633.0 1839.0,619.7 1839.6,635.7 1840.2,619.9 1840.8,613.3" fill="none" stroke="#f2f2f2" stroke-width="1.3" stroke-linejoin="round"/><line x1="1518.2" y1="555.1" x2="1518.2" y2="590.1" stroke="#e8e8e8" stroke-width="1.4"/><circle cx="1518.2" cy="555.1" r="6.2" fill="#1ea8e0"/><line x1="1550.8" y1="535.1" x2="1550.8" y2="570.1" stroke="#e8e8e8" stroke-width="1.4"/><circle cx="1550.8" cy="535.1" r="6.2" fill="#f4ec10"/><line x1="1571.6" y1="553.5" x2="1571.6" y2="588.5" stroke="#e8e8e8" stroke-width="1.4"/><circle cx="1571.6" cy="553.5" r="6.2" fill="#e81818"/><line x1="1578.8" y1="579" x2="1578.8" y2="614" stroke="#e8e8e8" stroke-width="1.4"/><circle cx="1578.8" cy="579" r="6.2" fill="#7a30d8"/></svg>
<div class="t" style="left:1399.30px;top:507.29px;font-size:19.5px;line-height:19.5px;color:#ffffff;transform:scaleX(1.0237);transform-origin:0 0;">-10.0</div>
<div class="t" style="left:1399.30px;top:535.17px;font-size:19.5px;line-height:19.5px;color:#ffffff;transform:scaleX(1.0237);transform-origin:0 0;">-20.0</div>
<div class="t" style="left:1399.30px;top:563.05px;font-size:19.5px;line-height:19.5px;color:#ffffff;transform:scaleX(1.0237);transform-origin:0 0;">-30.0</div>
<div class="t" style="left:1399.30px;top:590.93px;font-size:19.5px;line-height:19.5px;color:#ffffff;transform:scaleX(1.0237);transform-origin:0 0;">-40.0</div>
<div class="t" style="left:1399.30px;top:618.81px;font-size:19.5px;line-height:19.5px;color:#ffffff;transform:scaleX(1.0237);transform-origin:0 0;">-50.0</div>
<div class="t" style="left:1399.30px;top:646.69px;font-size:19.5px;line-height:19.5px;color:#ffffff;transform:scaleX(1.0237);transform-origin:0 0;">-60.0</div>
<div class="t" style="left:1462.09px;top:660.88px;font-size:15.5px;line-height:15.5px;color:#ffffff;transform:scaleX(0.9200);transform-origin:0 0;">-60</div>
<div class="t" style="left:1488.04px;top:680.78px;font-size:15.5px;line-height:15.5px;color:#ffffff;transform:scaleX(0.9200);transform-origin:0 0;">-40</div>
<div class="t" style="left:1513.99px;top:660.88px;font-size:15.5px;line-height:15.5px;color:#ffffff;transform:scaleX(0.9200);transform-origin:0 0;">-20</div>
<div class="t" style="left:1546.28px;top:680.78px;font-size:15.5px;line-height:15.5px;color:#ffffff;transform:scaleX(0.9200);transform-origin:0 0;">0</div>
<div class="t" style="left:1568.27px;top:660.88px;font-size:15.5px;line-height:15.5px;color:#ffffff;transform:scaleX(0.9200);transform-origin:0 0;">20</div>
<div class="t" style="left:1594.22px;top:680.78px;font-size:15.5px;line-height:15.5px;color:#ffffff;transform:scaleX(0.9200);transform-origin:0 0;">40</div>
<div class="t" style="left:1620.17px;top:660.88px;font-size:15.5px;line-height:15.5px;color:#ffffff;transform:scaleX(0.9200);transform-origin:0 0;">60</div>
<div class="t" style="left:1646.12px;top:680.78px;font-size:15.5px;line-height:15.5px;color:#ffffff;transform:scaleX(0.9200);transform-origin:0 0;">80</div>
<div class="t" style="left:1668.10px;top:660.88px;font-size:15.5px;line-height:15.5px;color:#ffffff;transform:scaleX(0.9200);transform-origin:0 0;">100</div>
<div class="t" style="left:1694.05px;top:680.78px;font-size:15.5px;line-height:15.5px;color:#ffffff;transform:scaleX(0.9200);transform-origin:0 0;">120</div>
<div class="t" style="left:1720.00px;top:660.88px;font-size:15.5px;line-height:15.5px;color:#ffffff;transform:scaleX(0.9200);transform-origin:0 0;">140</div>
<div class="t" style="left:1745.95px;top:680.78px;font-size:15.5px;line-height:15.5px;color:#ffffff;transform:scaleX(0.9200);transform-origin:0 0;">160</div>
<div class="t" style="left:1771.90px;top:660.88px;font-size:15.5px;line-height:15.5px;color:#ffffff;transform:scaleX(0.9200);transform-origin:0 0;">180</div>
<div class="t" style="left:1797.85px;top:680.78px;font-size:15.5px;line-height:15.5px;color:#ffffff;transform:scaleX(0.9200);transform-origin:0 0;">200</div>
<div class="t" style="left:1823.80px;top:660.88px;font-size:15.5px;line-height:15.5px;color:#ffffff;transform:scaleX(0.9200);transform-origin:0 0;">220</div>
<div class="t" style="left:1538.50px;top:703.57px;font-size:20px;line-height:20px;color:#ffffff;transform:scaleX(0.9959);transform-origin:0 0;">Distance Difference (km)</div>
<div class="t" style="left:1374px;top:586.5px;font-size:19.5px;line-height:19.5px;color:#fff;transform:translate(-50%,-50%) rotate(-90deg) scaleX(1.035);">Magnitude (d...</div>
<div class="t" style="left:1436.50px;top:747.37px;font-size:22px;line-height:22px;color:#ffffff;transform:scaleX(0.9727);transform-origin:0 0;">TII Carriers</div>
<svg style="left:1830px;top:748px" width="24" height="22"><polygon points="3,3 21,3 12,19.5" fill="none" stroke="#d4e2f0" stroke-width="1.1"/></svg>
<svg style="left:1093px;top:773px" width="765" height="207" viewBox="1093 773 765 207"><line x1="1206" y1="828.5" x2="1836.6" y2="828.5" stroke="rgba(255,255,255,0.6)" stroke-width="1"/><line x1="1206" y1="862.5" x2="1836.6" y2="862.5" stroke="rgba(255,255,255,0.6)" stroke-width="1"/><line x1="1206" y1="896.5" x2="1836.6" y2="896.5" stroke="rgba(255,255,255,0.6)" stroke-width="1"/><line x1="1206" y1="930.5" x2="1836.6" y2="930.5" stroke="rgba(255,255,255,0.6)" stroke-width="1"/><line x1="1244.5" y1="794" x2="1244.5" y2="963.6" stroke="rgba(255,255,255,0.6)" stroke-width="1"/><line x1="1306.5" y1="794" x2="1306.5" y2="963.6" stroke="rgba(255,255,255,0.6)" stroke-width="1"/><line x1="1368.5" y1="794" x2="1368.5" y2="963.6" stroke="rgba(255,255,255,0.6)" stroke-width="1"/><line x1="1429.5" y1="794" x2="1429.5" y2="963.6" stroke="rgba(255,255,255,0.6)" stroke-width="1"/><line x1="1491.5" y1="794" x2="1491.5" y2="963.6" stroke="rgba(255,255,255,0.6)" stroke-width="1"/><line x1="1552.5" y1="794" x2="1552.5" y2="963.6" stroke="rgba(255,255,255,0.6)" stroke-width="1"/><line x1="1614.5" y1="794" x2="1614.5" y2="963.6" stroke="rgba(255,255,255,0.6)" stroke-width="1"/><line x1="1676.5" y1="794" x2="1676.5" y2="963.6" stroke="rgba(255,255,255,0.6)" stroke-width="1"/><line x1="1737.5" y1="794" x2="1737.5" y2="963.6" stroke="rgba(255,255,255,0.6)" stroke-width="1"/><line x1="1799.5" y1="794" x2="1799.5" y2="963.6" stroke="rgba(255,255,255,0.6)" stroke-width="1"/><line x1="1206" y1="794" x2="1836.6" y2="794" stroke="#a8a8a8" stroke-width="1.6"/><line x1="1206" y1="794" x2="1206" y2="963.6" stroke="#a8a8a8" stroke-width="1.6"/><line x1="1206" y1="962.5" x2="1836.6" y2="962.5" stroke="#9a9a9a" stroke-width="3"/><line x1="1836.6" y1="794" x2="1836.6" y2="964" stroke="#d84848" stroke-width="1.6"/><line x1="1285.7" y1="795" x2="1285.7" y2="963" stroke="#e8e020" stroke-width="2" stroke-dasharray="1.6,2"/><line x1="1403.5" y1="795" x2="1403.5" y2="963" stroke="#e8e020" stroke-width="2" stroke-dasharray="1.6,2"/><line x1="1521.3" y1="795" x2="1521.3" y2="963" stroke="#e8e020" stroke-width="2" stroke-dasharray="1.6,2"/><line x1="1640.3" y1="795" x2="1640.3" y2="963" stroke="#e8e020" stroke-width="2" stroke-dasharray="1.6,2"/><line x1="1758.6" y1="795" x2="1758.6" y2="963" stroke="#e8e020" stroke-width="2" stroke-dasharray="1.6,2"/><polygon points="1300.9,963 1302.6,902.5 1303.7,963" fill="#c8c838"/><line x1="1302.6" y1="963" x2="1302.6" y2="902.5" stroke="#f0f040" stroke-width="1"/><line x1="1303.5" y1="963" x2="1303.5" y2="839.8" stroke="#e6f0dc" stroke-width="1.7"/><polygon points="1330.5,963 1332.2,905.9 1333.3,963" fill="#c8c838"/><line x1="1332.2" y1="963" x2="1332.2" y2="905.9" stroke="#f0f040" stroke-width="1"/><line x1="1333.1" y1="963" x2="1333.1" y2="861.8" stroke="#e6f0dc" stroke-width="1.7"/><polygon points="1345.2,963 1346.9,924.6 1348.0,963" fill="#c8c838"/><line x1="1346.9" y1="963" x2="1346.9" y2="924.6" stroke="#f0f040" stroke-width="1"/><line x1="1347.8" y1="963" x2="1347.8" y2="863.5" stroke="#e6f0dc" stroke-width="1.7"/><polygon points="1360.1,963 1361.8,912.7 1362.9,963" fill="#c8c838"/><line x1="1361.8" y1="963" x2="1361.8" y2="912.7" stroke="#f0f040" stroke-width="1"/><line x1="1362.7" y1="963" x2="1362.7" y2="851.7" stroke="#e6f0dc" stroke-width="1.7"/><polygon points="1419.2,963 1420.9,904.2 1422.0,963" fill="#c8c838"/><line x1="1420.9" y1="963" x2="1420.9" y2="904.2" stroke="#f0f040" stroke-width="1"/><line x1="1421.8" y1="963" x2="1421.8" y2="838.1" stroke="#e6f0dc" stroke-width="1.7"/><polygon points="1448.8,963 1450.5,899.2 1451.6,963" fill="#c8c838"/><line x1="1450.5" y1="963" x2="1450.5" y2="899.2" stroke="#f0f040" stroke-width="1"/><line x1="1451.4" y1="963" x2="1451.4" y2="850.0" stroke="#e6f0dc" stroke-width="1.7"/><polygon points="1463.3,963 1465.0,917.8 1466.1,963" fill="#c8c838"/><line x1="1465.0" y1="963" x2="1465.0" y2="917.8" stroke="#f0f040" stroke-width="1"/><line x1="1465.9" y1="963" x2="1465.9" y2="851.7" stroke="#e6f0dc" stroke-width="1.7"/><polygon points="1478.6,963 1480.3,865.2 1481.4,963" fill="#c8c838"/><line x1="1480.3" y1="963" x2="1480.3" y2="865.2" stroke="#f0f040" stroke-width="1"/><line x1="1481.2" y1="963" x2="1481.2" y2="834.7" stroke="#e6f0dc" stroke-width="1.7"/><polygon points="1538.2,963 1539.9,873.7 1541.0,963" fill="#c8c838"/><line x1="1539.9" y1="963" x2="1539.9" y2="873.7" stroke="#f0f040" stroke-width="1"/><line x1="1540.8" y1="963" x2="1540.8" y2="800.8" stroke="#e6f0dc" stroke-width="1.7"/><polygon points="1567.8,963 1569.5,902.5 1570.6,963" fill="#c8c838"/><line x1="1569.5" y1="963" x2="1569.5" y2="902.5" stroke="#f0f040" stroke-width="1"/><line x1="1570.4" y1="963" x2="1570.4" y2="811.0" stroke="#e6f0dc" stroke-width="1.7"/><polygon points="1582.1,963 1583.8,900.8 1584.9,963" fill="#c8c838"/><line x1="1583.8" y1="963" x2="1583.8" y2="900.8" stroke="#f0f040" stroke-width="1"/><line x1="1584.7" y1="963" x2="1584.7" y2="817.7" stroke="#e6f0dc" stroke-width="1.7"/><polygon points="1596.8,963 1598.5,870.3 1599.6,963" fill="#c8c838"/><line x1="1598.5" y1="963" x2="1598.5" y2="870.3" stroke="#f0f040" stroke-width="1"/><line x1="1599.4" y1="963" x2="1599.4" y2="817.7" stroke="#e6f0dc" stroke-width="1.7"/><polygon points="1656.2,963 1657.9,895.8 1659.0,963" fill="#c8c838"/><line x1="1657.9" y1="963" x2="1657.9" y2="895.8" stroke="#f0f040" stroke-width="1"/><line x1="1658.8" y1="963" x2="1658.8" y2="800.8" stroke="#e6f0dc" stroke-width="1.7"/><polygon points="1685.6,963 1687.3,895.8 1688.4,963" fill="#c8c838"/><line x1="1687.3" y1="963" x2="1687.3" y2="895.8" stroke="#f0f040" stroke-width="1"/><line x1="1688.2" y1="963" x2="1688.2" y2="794.0" stroke="#e6f0dc" stroke-width="1.7"/><polygon points="1700.1,963 1701.8,904.2 1702.9,963" fill="#c8c838"/><line x1="1701.8" y1="963" x2="1701.8" y2="904.2" stroke="#f0f040" stroke-width="1"/><line x1="1702.7" y1="963" x2="1702.7" y2="794.0" stroke="#e6f0dc" stroke-width="1.7"/><polygon points="1715.4,963 1717.1,907.6 1718.2,963" fill="#c8c838"/><line x1="1717.1" y1="963" x2="1717.1" y2="907.6" stroke="#f0f040" stroke-width="1"/><line x1="1718.0" y1="963" x2="1718.0" y2="794.0" stroke="#e6f0dc" stroke-width="1.7"/><line x1="1743" y1="963" x2="1743" y2="955" stroke="#909090" stroke-width="1.5"/></svg>
<div class="t" style="left:1168.66px;top:783.52px;font-size:21px;line-height:21px;color:#ffffff;transform:scaleX(0.8850);transform-origin:0 0;">1.0</div>
<div class="t" style="left:1168.66px;top:817.62px;font-size:21px;line-height:21px;color:#ffffff;transform:scaleX(0.8850);transform-origin:0 0;">0.8</div>
<div class="t" style="left:1168.66px;top:851.72px;font-size:21px;line-height:21px;color:#ffffff;transform:scaleX(0.8850);transform-origin:0 0;">0.6</div>
<div class="t" style="left:1168.66px;top:885.82px;font-size:21px;line-height:21px;color:#ffffff;transform:scaleX(0.8850);transform-origin:0 0;">0.4</div>
<div class="t" style="left:1168.66px;top:919.92px;font-size:21px;line-height:21px;color:#ffffff;transform:scaleX(0.8850);transform-origin:0 0;">0.2</div>
<div class="t" style="left:1168.66px;top:954.02px;font-size:21px;line-height:21px;color:#ffffff;transform:scaleX(0.8850);transform-origin:0 0;">0.0</div>
<div class="t" style="left:1231.10px;top:969.22px;font-size:21px;line-height:21px;color:#ffffff;transform:scaleX(0.8850);transform-origin:0 0;">900</div>
<div class="t" style="left:1292.70px;top:969.22px;font-size:21px;line-height:21px;color:#ffffff;transform:scaleX(0.8850);transform-origin:0 0;">700</div>
<div class="t" style="left:1354.30px;top:969.22px;font-size:21px;line-height:21px;color:#ffffff;transform:scaleX(0.8850);transform-origin:0 0;">500</div>
<div class="t" style="left:1415.90px;top:969.22px;font-size:21px;line-height:21px;color:#ffffff;transform:scaleX(0.8850);transform-origin:0 0;">300</div>
<div class="t" style="left:1477.50px;top:969.22px;font-size:21px;line-height:21px;color:#ffffff;transform:scaleX(0.8850);transform-origin:0 0;">100</div>
<div class="t" style="left:1539.10px;top:969.22px;font-size:21px;line-height:21px;color:#ffffff;transform:scaleX(0.8850);transform-origin:0 0;">100</div>
<div class="t" style="left:1600.70px;top:969.22px;font-size:21px;line-height:21px;color:#ffffff;transform:scaleX(0.8850);transform-origin:0 0;">300</div>
<div class="t" style="left:1662.30px;top:969.22px;font-size:21px;line-height:21px;color:#ffffff;transform:scaleX(0.8850);transform-origin:0 0;">500</div>
<div class="t" style="left:1723.90px;top:969.22px;font-size:21px;line-height:21px;color:#ffffff;transform:scaleX(0.8850);transform-origin:0 0;">700</div>
<div class="t" style="left:1785.50px;top:969.22px;font-size:21px;line-height:21px;color:#ffffff;transform:scaleX(0.8850);transform-origin:0 0;">900</div>
<div class="t" style="left:1136.5px;top:880px;font-size:19.7px;line-height:19.7px;color:#fff;transform:translate(-50%,-50%) rotate(-90deg);">Magnitude</div>
<div style="left:0px;top:979px;width:1093px;height:1px;background:transparent;background-image:repeating-linear-gradient(90deg,#0a1a30 0 2px,transparent 2px 4px);"></div>
</body></html>
